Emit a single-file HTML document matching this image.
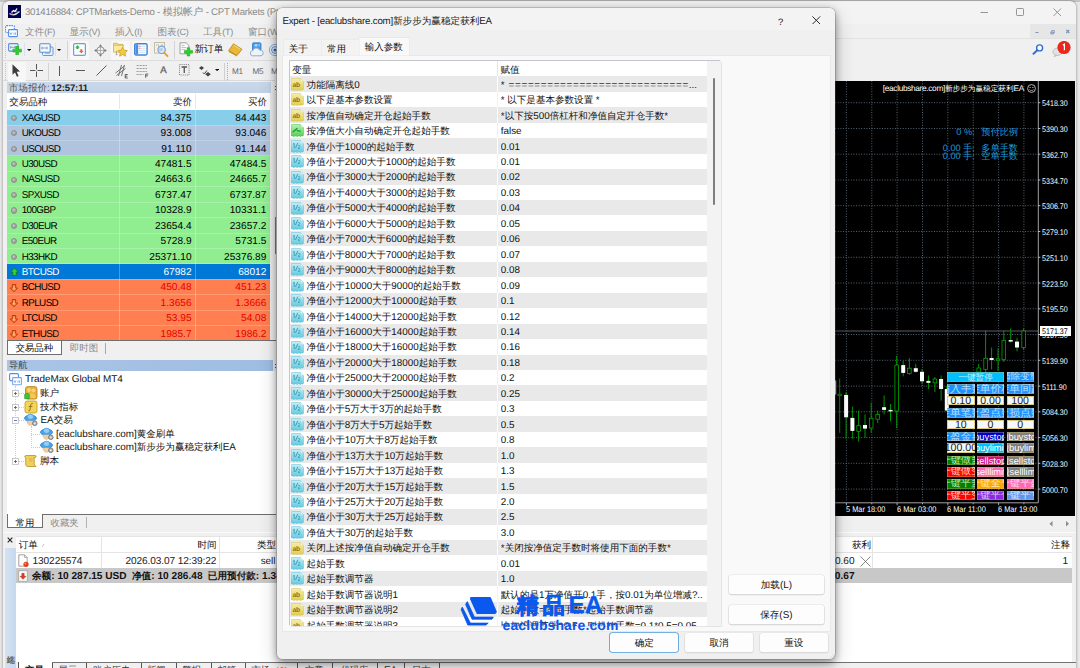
<!DOCTYPE html><html><head><meta charset="utf-8"><title>MT4</title><style>
*{margin:0;padding:0;box-sizing:border-box}
html,body{width:1080px;height:668px;overflow:hidden}
body{position:relative;background:#f0f0f0;font-family:"Liberation Sans",sans-serif;font-size:10px;color:#000;line-height:1;text-rendering:geometricPrecision}
.abs,.abs>*{position:absolute}
div,span,svg{position:absolute;white-space:nowrap}
i{font-style:normal;position:static}
.t{overflow:visible}

.lat{letter-spacing:-0.2px}
.mw{font-size:10px}

i{font-size:9.9px;letter-spacing:0}.seg i{font-size:.95em;letter-spacing:-.27px}
.mr{font-size:9.9px;letter-spacing:-.6px}.mn{font-size:10.1px;letter-spacing:.03px}
.tb i{font-size:10.1px;letter-spacing:.02px}
.pl{font-size:8.2px;color:#fff;transform:scaleX(.87);transform-origin:0 50%}
.bi{font-family:"Liberation Serif",serif;color:#1a98dc;font-size:9.2px}.bi i{font-family:"Liberation Sans",sans-serif;font-size:9.2px;letter-spacing:0}
.pb{overflow:hidden;display:flex;justify-content:center;font-family:"Liberation Serif",serif;box-shadow:inset 0 0 0 .6px rgba(205,185,95,.75)}.pb.l{font-family:"Liberation Sans",sans-serif;font-size:9.3px;letter-spacing:0;color:#fff}.pb.n{font-family:"Liberation Sans",sans-serif;font-size:10.6px;color:#1c1c1c;background:#f5f9ff;box-shadow:inset 0 0 0 .9px #dccb78}
.dr{font-size:9.56px;color:#111}.dr i{font-size:9.85px;letter-spacing:0}
.ic{overflow:visible}</style></head><body><div style="left:0px;top:0px;width:1080px;height:668px;background:#e9e9e9;"></div>
<div style="left:0px;top:0px;width:1080px;height:2px;background:#c4c4c4;"></div>
<div style="left:2.5px;top:1px;width:1073.5px;height:680px;background:#f0f0f0;border-radius:6px 6px 0 0;box-shadow:0 0 3px rgba(0,0,0,.45);"></div>
<div style="left:3px;top:1.5px;width:1072.5px;height:22.5px;background:#f3f3f3;border-radius:6px 6px 0 0;"></div>
<svg style="left:8px;top:5px" width="13" height="13" viewBox="0 0 13 13"><rect width="13" height="13" fill="#00004e"/><path d="M1.5 8.5 Q6 12 11.5 6.5" stroke="#e8e8f4" stroke-width="1.1" fill="none"/><path d="M3.5 7.5 L5.5 5.5 L7 6.5 L9 3.5" stroke="#fff" stroke-width="1.3" fill="none"/><circle cx="4" cy="8.6" r="0.9" fill="#d22"/><circle cx="8.8" cy="6.6" r="0.9" fill="#2a5"/></svg>
<div class="seg" style="top:6.10px;line-height:14.2px;height:14.2px;font-size:10.2px;left:25.00px;color:#8a8a8a;letter-spacing:-0.1px;"><i>301416884: CPTMarkets-Demo -</i> 模拟帐户 <i>- CPT Markets (Pty</i></div>
<svg style="left:980px;top:2px" width="96" height="22" viewBox="0 0 96 22"><g stroke="#8a8a8a" stroke-width="0.9" fill="none"><path d="M0.5 10.5h7.5"/><rect x="36.5" y="6.5" width="7" height="7" rx="0.8"/><path d="M73.5 6.5l7.5 7.5M81 6.5l-7.5 7.5"/></g></svg>
<div style="left:3px;top:24px;width:1072.5px;height:14px;background:#f0f0f0;"></div>
<svg style="left:5.300px;top:25px" width="14" height="13" viewBox="0 0 14 13"><rect x="0.6" y="0.6" width="8.8" height="7" rx="1" fill="#fff" stroke="#4f8fea" stroke-width="1.1" stroke-dasharray="1.6 0.8"/><rect x="3.6" y="4.6" width="8.8" height="7" rx="0.8" fill="#fff" stroke="#4f8fea" stroke-width="1.1"/><path d="M5 7.5l1 2 1-2 M9 7.5v2.2 M10.5 7.5v2.2" stroke="#5aa0f0" stroke-width="0.8" fill="none"/></svg>
<div class="seg" style="top:25.60px;line-height:13.6px;height:13.6px;font-size:9.6px;left:25.00px;color:#8c8c8c;">文件<i>(F)</i></div>
<div class="seg" style="top:25.60px;line-height:13.6px;height:13.6px;font-size:9.6px;left:69.50px;color:#8c8c8c;">显示<i>(V)</i></div>
<div class="seg" style="top:25.60px;line-height:13.6px;height:13.6px;font-size:9.6px;left:115.00px;color:#8c8c8c;">插入<i>(I)</i></div>
<div class="seg" style="top:25.60px;line-height:13.6px;height:13.6px;font-size:9.6px;left:157.50px;color:#8c8c8c;">图表<i>(C)</i></div>
<div class="seg" style="top:25.60px;line-height:13.6px;height:13.6px;font-size:9.6px;left:203.00px;color:#8c8c8c;">工具<i>(T)</i></div>
<div class="seg" style="top:25.60px;line-height:13.6px;height:13.6px;font-size:9.6px;left:248.00px;color:#8c8c8c;">窗口<i>(W)</i></div>
<div style="left:1030px;top:24px;width:45.5px;height:14px;background:#e6e6e6;"></div>
<svg style="left:1023px;top:24px" width="52" height="14" viewBox="0 0 52 14"><g stroke="#7c93b2" stroke-width="1" fill="none"><path d="M12.5 8.5h3"/><path d="M28.800 6.500h2.500v2.500h-2.500z M27.800 8h2.500v2h-2.500z" stroke-width="0.8"/><path d="M43.300 6l3 3M46.300 6l-3 3" stroke-width="1.100"/></g></svg>
<div style="left:3px;top:38px;width:1072.5px;height:1px;background:#e2e2e2;"></div>
<div style="left:3px;top:60px;width:272px;height:1px;background:#dcdcdc;"></div>
<div style="left:3px;top:80px;width:272px;height:1px;background:#dadada;"></div>
<div style="left:4.5px;top:41px;width:1px;height:17px;border-left:1px dotted #c4c4c4;"></div>
<div style="left:4.5px;top:63px;width:1px;height:17px;border-left:1px dotted #c4c4c4;"></div>
<svg style="left:8.2px;top:43px" width="14" height="12" viewBox="0 0 14 12"><rect x="0.600" y=".6" width="9.500" height="7.500" rx="1" fill="#eaf2fb" stroke="#5b8ed0" stroke-width="1.100"/><path d="M2.300 4.300h5M2.800 2.800v3M7 2.800v3" stroke="#6a86a8" stroke-width=".7"/><path d="M7.800 3.300h2.800v2.900h2.900v2.800h-2.900v2.800h-2.800v-2.800h-2.900v-2.800h2.900z" fill="#2fce2f" stroke="#18a018" stroke-width=".5"/></svg>
<svg style="left:27px;top:48.6px" width="4.2" height="2.2" viewBox="0 0 4.2 2.2"><path d="M0 0h4.200l-2.100 2.200z" fill="#111"/></svg>
<div style="left:23.5px;top:43px;width:1px;height:13px;background:#d6e2f2;"></div>
<svg style="left:39px;top:43px" width="16" height="15" viewBox="0 0 16 15"><rect x="3.5" y="4" width="10.5" height="8.5" rx="1" fill="#e8f0fa" stroke="#6a9ad6" stroke-width="1"/><rect x="0.7" y="0.8" width="10.5" height="8.5" rx="1" fill="#f4f8fd" stroke="#5b8ed0" stroke-width="1.1"/><path d="M2.5 5h6M3 3.6v2.8M8 3.6v2.8" stroke="#6a86a8" stroke-width=".7"/><path d="M6 10.5h5" stroke="#8aa8cc" stroke-width=".7"/></svg>
<svg style="left:57.4px;top:48.6px" width="4.2" height="2.2" viewBox="0 0 4.2 2.2"><path d="M0 0h4.200l-2.100 2.200z" fill="#111"/></svg>
<div style="left:54.5px;top:43px;width:1px;height:13px;background:#d6e2f2;"></div>
<div style="left:67px;top:41px;width:1px;height:18px;background:#d4d4d4;"></div>
<div style="left:70px;top:40.5px;width:19px;height:19px;background:#f8f8f8;border-radius:2px;"></div>
<svg style="left:73px;top:43px" width="13" height="13" viewBox="0 0 13 13"><rect x="0.6" y="0.6" width="11.8" height="11.8" rx="1.2" fill="#fafcff" stroke="#6aa0dc" stroke-width="1.2"/><path d="M4.5 2.2l2.3 2.3h-1.3v1.6h-2v-1.6h-1.3z" fill="#2cb52c"/><path d="M8.3 10.2l-2.3-2.3h1.3v-1.6h2v1.6h1.3z" fill="#f06030"/></svg>
<svg style="left:94px;top:43.5px" width="13" height="13" viewBox="0 0 13 13"><circle cx="6.5" cy="6.5" r="3.700" fill="none" stroke="#8a8a8a" stroke-width=".9"/><path d="M6.500 2v9M2 6.500h9" stroke="#9a9a9a" stroke-width=".7"/><path d="M6.500 .2l1.700 2.300h-3.400zM6.500 12.800l1.700-2.300h-3.400zM.2 6.500l2.300-1.700v3.400zM12.800 6.500l-2.300-1.700v3.400z" fill="#777"/></svg>
<div style="left:110.5px;top:40.5px;width:19.5px;height:19px;background:#f8f8f8;border-radius:2px;"></div>
<svg style="left:113px;top:42px" width="15" height="16" viewBox="0 0 15 16"><path d="M0.5 3.2v-2h4l1 1.2h4.5v2.5" fill="#f6e08a" stroke="#caa83a" stroke-width=".7"/><path d="M0.5 3.2h9.8l-1 7h-8.8z" fill="#fbeaa0" stroke="#caa83a" stroke-width=".7"/><path d="M3.5 9v4M2.6 12.2l.9 1 .9-1" stroke="#888" stroke-width=".6" fill="none"/><path d="M9.6 5.2l1.5 3 3.3.4-2.4 2.3.6 3.3-3-1.6-3 1.6.6-3.3-2.4-2.3 3.3-.4z" fill="#f5c93a" stroke="#c89a1c" stroke-width=".7"/></svg>
<div style="left:131.5px;top:40.5px;width:18px;height:19px;background:#f8f8f8;border-radius:2px;"></div>
<svg style="left:134px;top:43px" width="14" height="13" viewBox="0 0 14 13"><rect x="0.700" y="0.700" width="12.400" height="11.300" rx="1.400" fill="#fff" stroke="#3f86d8" stroke-width="1.400"/><rect x="1.400" y="1.400" width="2.800" height="9.900" fill="#4a90e0"/><path d="M5 3.300h6.800M5 5.300h6.800M5 7.300h6.800M5 9.300h6.800" stroke="#c4d8f0" stroke-width=".7"/><path d="M4.600 3.300h2M4.600 5.300h2" stroke="#f08a8a" stroke-width=".8"/></svg>
<svg style="left:154px;top:42px" width="16" height="17" viewBox="0 0 16 17"><rect x="0.6" y="0.6" width="10" height="10.5" fill="#f5f1e6" stroke="#b8ae98" stroke-width=".8"/><path d="M2 3h1.5M4.5 2.5v2M7 3h2" stroke="#8aa" stroke-width=".7"/><circle cx="7.6" cy="7.8" r="3.7" fill="#d7e8fa" fill-opacity=".85" stroke="#7aa2d6" stroke-width="1.2"/><path d="M6 6.4v2.6M7.8 6v3" stroke="#7aa2d6" stroke-width=".7"/><path d="M10.4 10.8l3.2 3.4" stroke="#e0a030" stroke-width="1.8" stroke-linecap="round"/></svg>
<div style="left:173.5px;top:41px;width:1px;height:18px;background:#d4d4d4;"></div>
<svg style="left:179px;top:42px" width="16" height="17" viewBox="0 0 16 17"><path d="M1 .8h6.2l2.6 2.6v8.4h-8.8z" fill="#fafafa" stroke="#8a8a8a" stroke-width=".8"/><path d="M2.5 3.5h3M2.5 5.5h5M2.5 7.500h4" stroke="#aaa" stroke-width=".7"/><path d="M8.200 5.800h2.600v2.800h2.800v2.600h-2.800v2.800h-2.600v-2.800h-2.800v-2.600h2.800z" fill="#2fce2f" stroke="#18a018" stroke-width=".5"/></svg>
<div style="top:42.60px;line-height:13.6px;height:13.6px;font-size:9.6px;left:194.50px;color:#111;">新订单</div>
<svg style="left:228px;top:43px" width="15" height="14" viewBox="0 0 15 14"><path d="M5.5 .8l8.5 5.5-5 6.2-8.3-5z" fill="#e9b83a" stroke="#b88412" stroke-width=".8"/><path d="M.8 7.6l8.2 4.9 0 1-8.2-4.6z" fill="#c48e1a"/><path d="M5.8 2l6.6 4.4" stroke="#f8dc80" stroke-width=".9"/></svg>
<svg style="left:249px;top:42px" width="15" height="16" viewBox="0 0 15 16"><rect x="3.5" y=".8" width="8.5" height="7.5" rx="1.2" fill="#4aa0ec" stroke="#2a78c8" stroke-width=".8"/><path d="M5.5 3.2h3M7 2.2v2.5M9.5 3h1.5" stroke="#fff" stroke-width=".7"/><path d="M3.2 13.800a2.600 2.600 0 0 1 .6-5.100a3.600 3.600 0 0 1 6.800-.6a2.900 2.900 0 0 1 1.400 5.700z" fill="#eef3fa" stroke="#8aa4c8" stroke-width=".9"/></svg>
<svg style="left:268px;top:43px" width="12" height="14" viewBox="0 0 12 14"><circle cx="7" cy="7" r="5.6" fill="none" stroke="#8ab0dc" stroke-width="1"/><circle cx="7" cy="7" r="3.4" fill="none" stroke="#5a90d0" stroke-width="1"/><circle cx="7" cy="7" r="1.6" fill="#2a68c0"/><rect x="9" y="5" width="3" height="9" fill="#3aa83a"/></svg>
<div style="left:7.5px;top:61.5px;width:18.5px;height:20px;background:#f7f7f7;border-radius:2px;"></div>
<svg style="left:12px;top:63.9px" width="8" height="13" viewBox="0 0 8 13"><path d="M.5 .3v10.500l2.500-2.300 1.900 4.200 1.700-.8-1.900-4.100 3.300-.3z" fill="#3c3c3c"/></svg>
<svg style="left:30px;top:64.1px" width="13" height="13" viewBox="0 0 13 13"><path d="M6.500 0v13M0 6.500h13" stroke="#555" stroke-width="1"/><rect x="5.500" y="5.500" width="2" height="2" fill="#f0f0f0"/></svg>
<div style="left:48px;top:63px;width:1px;height:17px;background:#d4d4d4;"></div>
<div style="left:59px;top:65.5px;width:1px;height:10.5px;background:#5a5a5a;"></div>
<div style="left:75.5px;top:70px;width:9.5px;height:1px;background:#5a5a5a;"></div>
<svg style="left:96px;top:65px" width="11" height="11" viewBox="0 0 11 11"><path d="M.5 10.500l10-10" stroke="#5a5a5a" stroke-width="1"/></svg>
<svg style="left:115px;top:63.5px" width="14" height="15" viewBox="0 0 14 15"><path d="M.5 9l9-7M1.500 11.500l9-7M3.500 12l3-11M6.500 12l3-11" stroke="#666" stroke-width=".9"/><path d="M10.200 10.500h2.600M10.200 10.500v3.500h2.600M10.200 12.200h2.200" stroke="#444" stroke-width=".8" fill="none"/></svg>
<svg style="left:136px;top:64px" width="13" height="14" viewBox="0 0 13 14"><path d="M.5 1.500h10.500M.5 4.500h10.500M.5 7.500h10.500M.5 10.500h7" stroke="#8a8a8a" stroke-width=".8" stroke-dasharray="2.200 .8"/><path d="M9.700 10h2.600M9.700 10v3.800M9.700 11.800h2.200" stroke="#444" stroke-width=".8" fill="none"/></svg>
<div style="top:64.40px;line-height:13.6px;height:13.6px;font-size:9.6px;left:160.30px;color:#666;-webkit-text-stroke:.35px #666;">A</div>
<svg style="left:179px;top:64px" width="11" height="12" viewBox="0 0 11 12"><rect x=".5" y=".5" width="9.500" height="10.500" fill="none" stroke="#777" stroke-width=".8" stroke-dasharray="1.200 .9"/><path d="M2.500 3h5.500M5.250 3v6" stroke="#555" stroke-width="1.300"/></svg>
<svg style="left:199px;top:65.7px" width="13" height="11" viewBox="0 0 13 11"><path d="M2.500 0l2.500 2-2.500 2-2.500-2zM9 6l2.800 2.200-2.800 2.200-2.800-2.200z" fill="#444"/><path d="M4 6.500l1.300 1.500 2.600-3.500" stroke="#444" stroke-width="1" fill="none"/></svg>
<svg style="left:214.5px;top:68.8px" width="4.2" height="2.2" viewBox="0 0 4.2 2.2"><path d="M0 0h4.200l-2.100 2.200z" fill="#111"/></svg>
<div style="left:224px;top:62.5px;width:1px;height:18px;background:#d0d0d0;"></div>
<div style="left:226.5px;top:63px;width:1px;height:17px;border-left:1px dotted #aaa;"></div>
<div style="top:65.60px;line-height:12.2px;height:12.2px;font-size:8.2px;left:232.00px;color:#686868;letter-spacing:-.2px;">M1</div>
<div style="top:65.60px;line-height:12.2px;height:12.2px;font-size:8.2px;left:252.50px;color:#686868;letter-spacing:-.2px;">M5</div>
<div style="top:65.60px;line-height:12.2px;height:12.2px;font-size:8.2px;left:271.00px;color:#686868;letter-spacing:-.2px;">M15</div>
<svg style="left:1032.3px;top:43.5px" width="12" height="11" viewBox="0 0 12 11"><circle cx="7.600" cy="3.900" r="3" fill="#fff" stroke="#2f6fd0" stroke-width="1.400"/><path d="M5.300 6.200l-3.800 3.600" stroke="#2f6fd0" stroke-width="1.900" stroke-linecap="round"/></svg>
<svg style="left:1052px;top:41.2px" width="22" height="17" viewBox="0 0 22 17"><ellipse cx="5.500" cy="10.800" rx="4.600" ry="3.700" fill="#e2e2e2" stroke="#b4b4b4" stroke-width=".7"/><path d="M3 13.500l-1 2.500 3.200-1.600z" fill="#d4d4d4" stroke="#b4b4b4" stroke-width=".5"/><circle cx="12" cy="6.500" r="6.600" fill="#e8291c"/><path d="M10.800 4.200l1.600-1v6" stroke="#fff" stroke-width="1.200" fill="none"/></svg>
<div style="left:3px;top:82.2px;width:272.5px;height:260px;background:#f0f0f0;"></div>
<div style="left:6.5px;top:82.4px;width:264.0px;height:10.6px;background:linear-gradient(#c9d9ea,#c2d3e6);"></div>
<div style="top:81.82px;line-height:13.56px;height:13.56px;font-size:9.56px;left:8.80px;color:#555;">市场报价<i style="letter-spacing:-.6px">: </i><b style="color:#222"><i style="font-size:9.500px;letter-spacing:-.1px">12:57:11</i></b></div>
<div style="left:275.3px;top:86px;width:1px;height:1px;background:#555;"></div>
<div style="left:275.3px;top:89px;width:1px;height:1px;background:#555;"></div>
<div style="left:6.5px;top:93.3px;width:263.5px;height:16.3px;background:#fff;"></div>
<div style="top:96.12px;line-height:13.56px;height:13.56px;font-size:9.56px;left:9.20px;color:#222;">交易品种</div>
<div style="top:96.12px;line-height:13.56px;height:13.56px;font-size:9.56px;right:888.00px;text-align:right;color:#222;">卖价</div>
<div style="top:96.12px;line-height:13.56px;height:13.56px;font-size:9.56px;right:813.00px;text-align:right;color:#222;">买价</div>
<div style="left:119px;top:94px;width:1px;height:15px;background:#e8e8e8;"></div>
<div style="left:194.5px;top:94px;width:1px;height:15px;background:#e8e8e8;"></div>
<div style="left:6.5px;top:109.6px;width:263.5px;height:15.73px;background:#87ceeb;overflow:hidden;"></div>
<div class="mr" style="top:111.77px;line-height:13.9px;height:13.9px;font-size:9.9px;left:21.70px;color:#000;">XAGUSD</div>
<div class="mn" style="top:111.67px;line-height:14.1px;height:14.1px;font-size:10.1px;right:888.40px;text-align:right;color:#000;">84.375</div>
<div class="mn" style="top:111.67px;line-height:14.1px;height:14.1px;font-size:10.1px;right:813.60px;text-align:right;color:#000;">84.443</div>
<div style="left:11.2px;top:114.81px;width:6.2px;height:6.2px;border-radius:50%;background:radial-gradient(circle at 40% 35%,#c8c8c8,#9a9a9a 70%,#858585);border:.5px solid #8d8d8d"></div>
<div style="left:6.5px;top:125.03px;width:263.5px;height:15.73px;background:#b0c4de;overflow:hidden;"></div>
<div class="mr" style="top:127.20px;line-height:13.9px;height:13.9px;font-size:9.9px;left:21.70px;color:#000;">UKOUSD</div>
<div class="mn" style="top:127.10px;line-height:14.1px;height:14.1px;font-size:10.1px;right:888.40px;text-align:right;color:#000;">93.008</div>
<div class="mn" style="top:127.10px;line-height:14.1px;height:14.1px;font-size:10.1px;right:813.60px;text-align:right;color:#000;">93.046</div>
<div style="left:11.2px;top:130.25px;width:6.2px;height:6.2px;border-radius:50%;background:radial-gradient(circle at 40% 35%,#c8c8c8,#9a9a9a 70%,#858585);border:.5px solid #8d8d8d"></div>
<div style="left:6.5px;top:140.46px;width:263.5px;height:15.73px;background:#b0c4de;overflow:hidden;"></div>
<div class="mr" style="top:142.62px;line-height:13.9px;height:13.9px;font-size:9.9px;left:21.70px;color:#000;">USOUSD</div>
<div class="mn" style="top:142.52px;line-height:14.1px;height:14.1px;font-size:10.1px;right:888.40px;text-align:right;color:#000;">91.110</div>
<div class="mn" style="top:142.52px;line-height:14.1px;height:14.1px;font-size:10.1px;right:813.60px;text-align:right;color:#000;">91.144</div>
<div style="left:11.2px;top:145.67px;width:6.2px;height:6.2px;border-radius:50%;background:radial-gradient(circle at 40% 35%,#c8c8c8,#9a9a9a 70%,#858585);border:.5px solid #8d8d8d"></div>
<div style="left:6.5px;top:155.89px;width:263.5px;height:15.73px;background:#90ee90;overflow:hidden;"></div>
<div class="mr" style="top:158.06px;line-height:13.9px;height:13.9px;font-size:9.9px;left:21.70px;color:#000;">U30USD</div>
<div class="mn" style="top:157.95px;line-height:14.1px;height:14.1px;font-size:10.1px;right:888.40px;text-align:right;color:#000;">47481.5</div>
<div class="mn" style="top:157.95px;line-height:14.1px;height:14.1px;font-size:10.1px;right:813.60px;text-align:right;color:#000;">47484.5</div>
<div style="left:11.2px;top:161.10px;width:6.2px;height:6.2px;border-radius:50%;background:radial-gradient(circle at 40% 35%,#c8c8c8,#9a9a9a 70%,#858585);border:.5px solid #8d8d8d"></div>
<div style="left:6.5px;top:171.32px;width:263.5px;height:15.73px;background:#90ee90;overflow:hidden;"></div>
<div class="mr" style="top:173.49px;line-height:13.9px;height:13.9px;font-size:9.9px;left:21.70px;color:#000;">NASUSD</div>
<div class="mn" style="top:173.38px;line-height:14.1px;height:14.1px;font-size:10.1px;right:888.40px;text-align:right;color:#000;">24663.6</div>
<div class="mn" style="top:173.38px;line-height:14.1px;height:14.1px;font-size:10.1px;right:813.60px;text-align:right;color:#000;">24665.7</div>
<div style="left:11.2px;top:176.53px;width:6.2px;height:6.2px;border-radius:50%;background:radial-gradient(circle at 40% 35%,#c8c8c8,#9a9a9a 70%,#858585);border:.5px solid #8d8d8d"></div>
<div style="left:6.5px;top:186.75px;width:263.5px;height:15.73px;background:#90ee90;overflow:hidden;"></div>
<div class="mr" style="top:188.92px;line-height:13.9px;height:13.9px;font-size:9.9px;left:21.70px;color:#000;">SPXUSD</div>
<div class="mn" style="top:188.81px;line-height:14.1px;height:14.1px;font-size:10.1px;right:888.40px;text-align:right;color:#000;">6737.47</div>
<div class="mn" style="top:188.81px;line-height:14.1px;height:14.1px;font-size:10.1px;right:813.60px;text-align:right;color:#000;">6737.87</div>
<div style="left:11.2px;top:191.97px;width:6.2px;height:6.2px;border-radius:50%;background:radial-gradient(circle at 40% 35%,#c8c8c8,#9a9a9a 70%,#858585);border:.5px solid #8d8d8d"></div>
<div style="left:6.5px;top:202.18px;width:263.5px;height:15.73px;background:#90ee90;overflow:hidden;"></div>
<div class="mr" style="top:204.35px;line-height:13.9px;height:13.9px;font-size:9.9px;left:21.70px;color:#000;">100GBP</div>
<div class="mn" style="top:204.25px;line-height:14.1px;height:14.1px;font-size:10.1px;right:888.40px;text-align:right;color:#000;">10328.9</div>
<div class="mn" style="top:204.25px;line-height:14.1px;height:14.1px;font-size:10.1px;right:813.60px;text-align:right;color:#000;">10331.1</div>
<div style="left:11.2px;top:207.40px;width:6.2px;height:6.2px;border-radius:50%;background:radial-gradient(circle at 40% 35%,#c8c8c8,#9a9a9a 70%,#858585);border:.5px solid #8d8d8d"></div>
<div style="left:6.5px;top:217.61px;width:263.5px;height:15.73px;background:#90ee90;overflow:hidden;"></div>
<div class="mr" style="top:219.78px;line-height:13.9px;height:13.9px;font-size:9.9px;left:21.70px;color:#000;">D30EUR</div>
<div class="mn" style="top:219.67px;line-height:14.1px;height:14.1px;font-size:10.1px;right:888.40px;text-align:right;color:#000;">23654.4</div>
<div class="mn" style="top:219.67px;line-height:14.1px;height:14.1px;font-size:10.1px;right:813.60px;text-align:right;color:#000;">23657.2</div>
<div style="left:11.2px;top:222.82px;width:6.2px;height:6.2px;border-radius:50%;background:radial-gradient(circle at 40% 35%,#c8c8c8,#9a9a9a 70%,#858585);border:.5px solid #8d8d8d"></div>
<div style="left:6.5px;top:233.04px;width:263.5px;height:15.73px;background:#90ee90;overflow:hidden;"></div>
<div class="mr" style="top:235.21px;line-height:13.9px;height:13.9px;font-size:9.9px;left:21.70px;color:#000;">E50EUR</div>
<div class="mn" style="top:235.10px;line-height:14.1px;height:14.1px;font-size:10.1px;right:888.40px;text-align:right;color:#000;">5728.9</div>
<div class="mn" style="top:235.10px;line-height:14.1px;height:14.1px;font-size:10.1px;right:813.60px;text-align:right;color:#000;">5731.5</div>
<div style="left:11.2px;top:238.25px;width:6.2px;height:6.2px;border-radius:50%;background:radial-gradient(circle at 40% 35%,#c8c8c8,#9a9a9a 70%,#858585);border:.5px solid #8d8d8d"></div>
<div style="left:6.5px;top:248.47px;width:263.5px;height:15.73px;background:#90ee90;overflow:hidden;"></div>
<div class="mr" style="top:250.63px;line-height:13.9px;height:13.9px;font-size:9.9px;left:21.70px;color:#000;">H33HKD</div>
<div class="mn" style="top:250.53px;line-height:14.1px;height:14.1px;font-size:10.1px;right:888.40px;text-align:right;color:#000;">25371.10</div>
<div class="mn" style="top:250.53px;line-height:14.1px;height:14.1px;font-size:10.1px;right:813.60px;text-align:right;color:#000;">25376.89</div>
<div style="left:11.2px;top:253.69px;width:6.2px;height:6.2px;border-radius:50%;background:radial-gradient(circle at 40% 35%,#c8c8c8,#9a9a9a 70%,#858585);border:.5px solid #8d8d8d"></div>
<div style="left:6.5px;top:263.9px;width:263.5px;height:15.73px;background:#0078d7;overflow:hidden;"></div>
<div class="mr" style="top:266.06px;line-height:13.9px;height:13.9px;font-size:9.9px;left:21.70px;color:#fff;">BTCUSD</div>
<div class="mn" style="top:265.96px;line-height:14.1px;height:14.1px;font-size:10.1px;right:888.40px;text-align:right;color:#fff;">67982</div>
<div class="mn" style="top:265.96px;line-height:14.1px;height:14.1px;font-size:10.1px;right:813.60px;text-align:right;color:#fff;">68012</div>
<svg style="left:10px;top:268.21px" width="9" height="8" viewBox="0 0 9 8"><path d="M4.500 .3l4 3.700h-2.300v3.500h-3.400v-3.500h-2.300z" fill="#38d038" stroke="#0a7a0a" stroke-width=".7"/></svg>
<div style="left:6.5px;top:279.33px;width:263.5px;height:15.73px;background:#ff7f50;overflow:hidden;"></div>
<div class="mr" style="top:281.49px;line-height:13.9px;height:13.9px;font-size:9.9px;left:21.70px;color:#000;">BCHUSD</div>
<div class="mn" style="top:281.39px;line-height:14.1px;height:14.1px;font-size:10.1px;right:888.40px;text-align:right;color:#e60000;">450.48</div>
<div class="mn" style="top:281.39px;line-height:14.1px;height:14.1px;font-size:10.1px;right:813.60px;text-align:right;color:#e60000;">451.23</div>
<svg style="left:9.8px;top:283.64px" width="8" height="8" viewBox="0 0 8 8"><defs><radialGradient id="og"><stop offset="0" stop-color="#ffc080"/><stop offset="1" stop-color="#ff6a20"/></radialGradient></defs><path d="M4 7.700l3.700-3.600h-2v-3.600h-3.400v3.600h-2z" fill="url(#og)" stroke="#b02800" stroke-width=".8"/></svg>
<div style="left:6.5px;top:294.76px;width:263.5px;height:15.73px;background:#ff7f50;overflow:hidden;"></div>
<div class="mr" style="top:296.92px;line-height:13.9px;height:13.9px;font-size:9.9px;left:21.70px;color:#000;">RPLUSD</div>
<div class="mn" style="top:296.82px;line-height:14.1px;height:14.1px;font-size:10.1px;right:888.40px;text-align:right;color:#e60000;">1.3656</div>
<div class="mn" style="top:296.82px;line-height:14.1px;height:14.1px;font-size:10.1px;right:813.60px;text-align:right;color:#e60000;">1.3666</div>
<svg style="left:9.8px;top:299.07px" width="8" height="8" viewBox="0 0 8 8"><defs><radialGradient id="og"><stop offset="0" stop-color="#ffc080"/><stop offset="1" stop-color="#ff6a20"/></radialGradient></defs><path d="M4 7.700l3.700-3.600h-2v-3.600h-3.400v3.600h-2z" fill="url(#og)" stroke="#b02800" stroke-width=".8"/></svg>
<div style="left:6.5px;top:310.19px;width:263.5px;height:15.73px;background:#ff7f50;overflow:hidden;"></div>
<div class="mr" style="top:312.35px;line-height:13.9px;height:13.9px;font-size:9.9px;left:21.70px;color:#000;">LTCUSD</div>
<div class="mn" style="top:312.25px;line-height:14.1px;height:14.1px;font-size:10.1px;right:888.40px;text-align:right;color:#e60000;">53.95</div>
<div class="mn" style="top:312.25px;line-height:14.1px;height:14.1px;font-size:10.1px;right:813.60px;text-align:right;color:#e60000;">54.08</div>
<svg style="left:9.8px;top:314.5px" width="8" height="8" viewBox="0 0 8 8"><defs><radialGradient id="og"><stop offset="0" stop-color="#ffc080"/><stop offset="1" stop-color="#ff6a20"/></radialGradient></defs><path d="M4 7.700l3.700-3.600h-2v-3.600h-3.400v3.600h-2z" fill="url(#og)" stroke="#b02800" stroke-width=".8"/></svg>
<div style="left:6.5px;top:325.62px;width:263.5px;height:14.68px;background:#ff7f50;overflow:hidden;"></div>
<div class="mr" style="top:327.78px;line-height:13.9px;height:13.9px;font-size:9.9px;left:21.70px;color:#000;clip-path:inset(0 0 1.7px 0);">ETHUSD</div>
<div class="mn" style="top:327.68px;line-height:14.1px;height:14.1px;font-size:10.1px;right:888.40px;text-align:right;color:#e60000;clip-path:inset(0 0 1.7px 0);">1985.7</div>
<div class="mn" style="top:327.68px;line-height:14.1px;height:14.1px;font-size:10.1px;right:813.60px;text-align:right;color:#e60000;clip-path:inset(0 0 1.7px 0);">1986.2</div>
<svg style="left:9.8px;top:329.94px" width="8" height="8" viewBox="0 0 8 8"><defs><radialGradient id="og"><stop offset="0" stop-color="#ffc080"/><stop offset="1" stop-color="#ff6a20"/></radialGradient></defs><path d="M4 7.700l3.700-3.600h-2v-3.600h-3.400v3.600h-2z" fill="url(#og)" stroke="#b02800" stroke-width=".8"/></svg>
<div style="left:119px;top:109.6px;width:1px;height:230.4px;background:rgba(255,255,255,.28);"></div>
<div style="left:194.5px;top:109.6px;width:1px;height:230.4px;background:rgba(255,255,255,.28);"></div>
<div style="left:6.5px;top:124.53px;width:264px;height:1px;background:rgba(255,255,255,.22);"></div>
<div style="left:6.5px;top:139.96px;width:264px;height:1px;background:rgba(255,255,255,.22);"></div>
<div style="left:6.5px;top:155.39px;width:264px;height:1px;background:rgba(255,255,255,.22);"></div>
<div style="left:6.5px;top:170.82px;width:264px;height:1px;background:rgba(255,255,255,.22);"></div>
<div style="left:6.5px;top:186.25px;width:264px;height:1px;background:rgba(255,255,255,.22);"></div>
<div style="left:6.5px;top:201.68px;width:264px;height:1px;background:rgba(255,255,255,.22);"></div>
<div style="left:6.5px;top:217.11px;width:264px;height:1px;background:rgba(255,255,255,.22);"></div>
<div style="left:6.5px;top:232.54px;width:264px;height:1px;background:rgba(255,255,255,.22);"></div>
<div style="left:6.5px;top:247.97px;width:264px;height:1px;background:rgba(255,255,255,.22);"></div>
<div style="left:6.5px;top:263.4px;width:264px;height:1px;background:rgba(255,255,255,.22);"></div>
<div style="left:6.5px;top:278.83px;width:264px;height:1px;background:rgba(255,255,255,.22);"></div>
<div style="left:6.5px;top:294.26px;width:264px;height:1px;background:rgba(255,255,255,.22);"></div>
<div style="left:6.5px;top:309.69px;width:264px;height:1px;background:rgba(255,255,255,.22);"></div>
<div style="left:6.5px;top:325.12px;width:264px;height:1px;background:rgba(255,255,255,.22);"></div>
<div style="left:270.5px;top:93.5px;width:5px;height:247px;background:#f0f0f0;"></div>
<div style="left:275px;top:216.5px;width:1.2px;height:37.5px;background:#7a7a7a;"></div>
<div style="left:6.5px;top:340px;width:269px;height:1px;background:#6e6e6e;"></div>
<div style="left:7.3px;top:340.5px;width:54.5px;height:14.2px;background:#fff;border:1px solid #6e6e6e;border-top:none;"></div>
<div style="top:341.57px;line-height:13.45px;height:13.45px;font-size:9.45px;left:15.40px;color:#111;">交易品种</div>
<div style="top:341.57px;line-height:13.45px;height:13.45px;font-size:9.45px;left:69.80px;color:#8a8a8a;">即时图</div>
<div style="left:105px;top:343px;width:1px;height:11px;background:#a8a8a8;"></div>
<div style="left:6.5px;top:360.2px;width:266px;height:11px;background:linear-gradient(90deg,#a9c4e6,#9fbde2);"></div>
<div style="top:359.20px;line-height:13.2px;height:13.2px;font-size:9.2px;left:9.00px;color:#444;">导航</div>
<div style="left:275.3px;top:364px;width:1px;height:1px;background:#555;"></div>
<div style="left:275.3px;top:367px;width:1px;height:1px;background:#555;"></div>
<div style="left:6.5px;top:371.2px;width:269px;height:142.8px;background:#fff;"></div>
<svg style="left:9px;top:373px" width="14" height="13" viewBox="0 0 14 13"><rect x=".6" y=".6" width="8.800" height="7" rx="1" fill="#fff" stroke="#4f8fea" stroke-width="1.100"/><rect x="3.600" y="4.600" width="8.800" height="7.200" rx=".8" fill="#fff" stroke="#7aa6e0" stroke-width="1.100"/><path d="M5 7.500l1 2 1-2M9 7.500v2.200M10.500 7.500v2.200" stroke="#5aa0f0" stroke-width=".8" fill="none"/></svg>
<div style="top:373.02px;line-height:13.95px;height:13.95px;font-size:9.95px;left:25.00px;color:#111;letter-spacing:-.04px;">TradeMax Global MT4</div>
<div style="left:14.5px;top:386px;width:1px;height:76px;border-left:1px dotted #cdcdcd;"></div>
<div style="left:15px;top:393px;width:9px;height:1px;border-top:1px dotted #cdcdcd;"></div>
<div style="left:15px;top:406.5px;width:9px;height:1px;border-top:1px dotted #cdcdcd;"></div>
<div style="left:15px;top:420px;width:9px;height:1px;border-top:1px dotted #cdcdcd;"></div>
<div style="left:15px;top:460.5px;width:9px;height:1px;border-top:1px dotted #cdcdcd;"></div>
<div style="left:30.5px;top:426px;width:1px;height:22px;border-left:1px dotted #cdcdcd;"></div>
<div style="left:31px;top:433.5px;width:9px;height:1px;border-top:1px dotted #cdcdcd;"></div>
<div style="left:31px;top:447px;width:9px;height:1px;border-top:1px dotted #cdcdcd;"></div>
<svg style="left:11.8px;top:390px" width="7" height="7" viewBox="0 0 7 7"><rect x=".5" y=".5" width="6" height="6" fill="#fff" stroke="#b4b4b4" stroke-width=".7"/><path d="M2 3.500h3M3.500 2v3" stroke="#3355aa" stroke-width=".8"/></svg>
<svg style="left:11.8px;top:403.5px" width="7" height="7" viewBox="0 0 7 7"><rect x=".5" y=".5" width="6" height="6" fill="#fff" stroke="#b4b4b4" stroke-width=".7"/><path d="M2 3.500h3M3.500 2v3" stroke="#3355aa" stroke-width=".8"/></svg>
<svg style="left:11.8px;top:417px" width="7" height="7" viewBox="0 0 7 7"><rect x=".5" y=".5" width="6" height="6" fill="#fff" stroke="#b4b4b4" stroke-width=".7"/><path d="M2 3.500h3" stroke="#3355aa" stroke-width=".8"/></svg>
<svg style="left:11.8px;top:457.5px" width="7" height="7" viewBox="0 0 7 7"><rect x=".5" y=".5" width="6" height="6" fill="#fff" stroke="#b4b4b4" stroke-width=".7"/><path d="M2 3.500h3M3.500 2v3" stroke="#3355aa" stroke-width=".8"/></svg>
<svg style="left:23.5px;top:386px" width="14" height="14" viewBox="0 0 14 14"><rect x="1.500" y=".6" width="11.500" height="12.500" rx="2.200" fill="#e8b23a" stroke="#b8801a" stroke-width=".8"/><circle cx="5" cy="4" r="2" fill="#f6d27a"/><circle cx="9.500" cy="4.500" r="2" fill="#f6d27a"/><path d="M6.500 7.500c2.500-1 5 .5 5 4.500h-5z" fill="#f2c860"/><path d="M.6 8.500c0-1.500 4.600-1.500 4.600 0v4.200h-4.600z" fill="#3ec43e" stroke="#1a8a1a" stroke-width=".5"/></svg>
<div style="top:387.22px;line-height:13.56px;height:13.56px;font-size:9.56px;left:40.00px;color:#111;">账户</div>
<svg style="left:23.5px;top:399.5px" width="14" height="14" viewBox="0 0 14 14"><rect x="1" y="1" width="12" height="12" rx="2.200" fill="#f3d35a" stroke="#c8a020" stroke-width=".9"/><path d="M8.800 3.500c-1.800-.6-2 1-2.300 3l-.6 3.500c-.2 1-1 1-1.500 .6M4.800 6.500h3.600" stroke="#8a6a10" stroke-width=".9" fill="none"/></svg>
<div style="top:400.82px;line-height:13.56px;height:13.56px;font-size:9.56px;left:40.00px;color:#111;">技术指标</div>
<svg style="left:23.5px;top:413px" width="14" height="14" viewBox="0 0 14 14"><ellipse cx="6.500" cy="5.200" rx="6" ry="3.200" fill="#4aa3e8" stroke="#2a7ac8" stroke-width=".7"/><ellipse cx="6.500" cy="3.800" rx="3.200" ry="2.600" fill="#8fd0f8" stroke="#3a8ad8" stroke-width=".6"/><path d="M3 7.800c0 3 2 4.500 3.500 4.500s3.500-1.500 3.500-4.500" fill="#f0d0a0" stroke="#c8a070" stroke-width=".5"/><circle cx="10.800" cy="10.300" r="2.300" fill="#b8b8b8" stroke="#6e6e6e" stroke-width=".8"/><circle cx="10.800" cy="10.300" r=".8" fill="#f4f4f4"/></svg>
<div style="top:414.02px;line-height:13.56px;height:13.56px;font-size:9.56px;left:40.50px;color:#111;"><i>EA</i>交易</div>
<svg style="left:39.5px;top:426.5px" width="14" height="14" viewBox="0 0 14 14"><ellipse cx="6.500" cy="5.200" rx="6" ry="3.200" fill="#4aa3e8" stroke="#2a7ac8" stroke-width=".7"/><ellipse cx="6.500" cy="3.800" rx="3.200" ry="2.600" fill="#8fd0f8" stroke="#3a8ad8" stroke-width=".6"/><path d="M3 7.800c0 3 2 4.500 3.500 4.500s3.500-1.500 3.500-4.500" fill="#f0d0a0" stroke="#c8a070" stroke-width=".5"/><circle cx="10.800" cy="10.300" r="2.300" fill="#b8b8b8" stroke="#6e6e6e" stroke-width=".8"/><circle cx="10.800" cy="10.300" r=".8" fill="#f4f4f4"/></svg>
<div style="top:427.62px;line-height:13.56px;height:13.56px;font-size:9.56px;left:56.00px;color:#111;"><i>[eaclubshare.com]</i>黄金刷单</div>
<svg style="left:39.5px;top:440px" width="14" height="14" viewBox="0 0 14 14"><ellipse cx="6.500" cy="5.200" rx="6" ry="3.200" fill="#4aa3e8" stroke="#2a7ac8" stroke-width=".7"/><ellipse cx="6.500" cy="3.800" rx="3.200" ry="2.600" fill="#8fd0f8" stroke="#3a8ad8" stroke-width=".6"/><path d="M3 7.800c0 3 2 4.500 3.500 4.500s3.500-1.500 3.500-4.500" fill="#f0d0a0" stroke="#c8a070" stroke-width=".5"/><circle cx="10.800" cy="10.300" r="2.300" fill="#b8b8b8" stroke="#6e6e6e" stroke-width=".8"/><circle cx="10.800" cy="10.300" r=".8" fill="#f4f4f4"/></svg>
<div style="top:441.02px;line-height:13.56px;height:13.56px;font-size:9.56px;left:56.00px;color:#111;"><i>[eaclubshare.com]</i>新步步为赢稳定获利<i>EA</i></div>
<svg style="left:23.5px;top:453.5px" width="14" height="14" viewBox="0 0 14 14"><path d="M2.500 1.500h8.500c1.500 0 1.500 2 0 2h-.8v6.500c0 1.500 2 2.500 2 2.500h-8.500c-1.500 0-2-1.200-2-2.500v-6c0-.8-.5-1-1-1.200c-.2-.8.500-1.300 1.800-1.300z" fill="#f1cf5e" stroke="#b8901c" stroke-width=".8"/><path d="M5 5h3.500M5 7h3.500" stroke="#c8a030" stroke-width=".7"/></svg>
<div style="top:454.62px;line-height:13.56px;height:13.56px;font-size:9.56px;left:40.00px;color:#111;">脚本</div>
<div style="left:6.5px;top:513.9px;width:269px;height:1px;background:#6e6e6e;"></div>
<div style="left:6.8px;top:514.4px;width:36px;height:14.1px;background:#fff;border:1px solid #6e6e6e;border-top:none;"></div>
<div style="top:516.30px;line-height:13.4px;height:13.4px;font-size:9.4px;left:15.50px;color:#111;">常用</div>
<div style="top:516.30px;line-height:13.4px;height:13.4px;font-size:9.4px;left:50.50px;color:#8a8a8a;">收藏夹</div>
<div style="left:85.8px;top:517px;width:1px;height:11px;background:#b4b4b4;"></div>
<div style="left:3px;top:534.5px;width:1073px;height:140px;background:#f0f0f0;"></div>
<div style="left:5px;top:548px;width:10.5px;height:127px;background:linear-gradient(90deg,#d4e2f3,#c6d8ee);"></div>
<svg style="left:6.5px;top:536.5px" width="6" height="6" viewBox="0 0 6 6"><path d="M.7 .7l4.600 4.600M5.300 .7l-4.600 4.600" stroke="#222" stroke-width="1.100"/></svg>
<div style="left:3.500px;top:649px;width:12px;font-size:8.500px;line-height:9px;color:#555;writing-mode:vertical-rl;white-space:nowrap;height:30px">终端</div>
<div style="left:16px;top:535.9px;width:1056px;height:126px;background:#fff;"></div>
<div style="left:3px;top:531.7px;width:1073px;height:1px;background:#fbfbfb;"></div>
<div style="left:16px;top:535.9px;width:1056px;height:1px;background:#e4e4e4;"></div>
<div style="left:16px;top:552.3px;width:1056px;height:1px;background:#e4e4e4;"></div>
<div style="left:100.5px;top:537px;width:1px;height:31px;background:#e4e4e4;"></div>
<div style="left:218.5px;top:537px;width:1px;height:31px;background:#e4e4e4;"></div>
<div style="left:872px;top:537px;width:1px;height:31px;background:#e4e4e4;"></div>
<div style="top:539.42px;line-height:13.56px;height:13.56px;font-size:9.56px;left:18.70px;color:#111;">订单</div>
<svg style="left:41.7px;top:544px" width="4" height="3" viewBox="0 0 4 3"><path d="M0 3l2-3" stroke="#aaa" stroke-width=".7"/></svg>
<div style="top:539.42px;line-height:13.56px;height:13.56px;font-size:9.56px;right:863.50px;text-align:right;color:#111;">时间</div>
<div style="top:539.42px;line-height:13.56px;height:13.56px;font-size:9.56px;right:804.00px;text-align:right;color:#111;">类型</div>
<div style="top:539.42px;line-height:13.56px;height:13.56px;font-size:9.56px;right:209.00px;text-align:right;color:#111;">获利</div>
<div style="top:539.42px;line-height:13.56px;height:13.56px;font-size:9.56px;right:10.00px;text-align:right;color:#111;">注释</div>
<svg style="left:18px;top:553.5px" width="11" height="14" viewBox="0 0 11 14"><path d="M.8 .8h5.700l2.700 2.700v8.700h-8.400z" fill="#fdfdfd" stroke="#8a8a8a" stroke-width=".8"/><path d="M6.500 .8v2.700h2.700" fill="none" stroke="#8a8a8a" stroke-width=".6"/><circle cx="8" cy="10.300" r="2.600" fill="#e8401c"/><circle cx="7.300" cy="9.600" r=".9" fill="#ff9a70"/></svg>
<div style="top:554.55px;line-height:14.1px;height:14.1px;font-size:10.1px;left:32.50px;color:#222;letter-spacing:-.08px;">130225574</div>
<div style="top:554.55px;line-height:14.1px;height:14.1px;font-size:10.1px;right:863.80px;text-align:right;color:#222;letter-spacing:-.1px;">2026.03.07 12:39:22</div>
<div style="top:554.65px;line-height:13.9px;height:13.9px;font-size:9.9px;right:804.50px;text-align:right;color:#222;">sell</div>
<div style="top:554.55px;line-height:14.1px;height:14.1px;font-size:10.1px;right:225.50px;text-align:right;color:#222;letter-spacing:-.05px;">0.60</div>
<svg style="left:860px;top:555.5px" width="11" height="11" viewBox="0 0 11 11"><path d="M.5 .5l10 10M10.500 .5l-10 10" stroke="#555" stroke-width=".7"/></svg>
<div style="top:554.55px;line-height:14.1px;height:14.1px;font-size:10.1px;right:12.00px;text-align:right;color:#222;">1</div>
<div style="left:16px;top:568.2px;width:1056px;height:14.5px;background:#c8c8c8;"></div>
<svg style="left:18px;top:569.5px" width="10" height="12" viewBox="0 0 10 12"><path d="M.7 .7h8.600v10.600h-8.600z" fill="#fff" stroke="#9a9a9a" stroke-width=".7"/><path d="M5 9.300l-3-3h1.800v-3h2.400v3h1.800z" fill="#e83a1c" stroke="#a01800" stroke-width=".4"/></svg>
<div class="tb" style="top:570.10px;line-height:13.6px;height:13.6px;font-size:9.6px;left:32.00px;color:#111;"><b>余额<i>: 10 287.15 USD</i>&nbsp; 净值<i>: 10 286.48</i>&nbsp; 已用预付款<i>: 1.34</i></b></div>
<div style="top:569.85px;line-height:14.1px;height:14.1px;font-size:10.1px;right:225.50px;text-align:right;color:#111;"><b>0.67</b></div>
<div style="left:16px;top:662.6px;width:1059.5px;height:8px;background:#f0f0f0;"></div>
<div style="left:51.5px;top:661.7px;width:1024px;height:1px;background:#747474;"></div>
<div style="left:17.5px;top:661.5px;width:34px;height:8px;background:#fff;border-left:1px solid #555;"></div>
<div style="top:663.85px;line-height:13.3px;height:13.3px;font-size:9.3px;left:25.00px;color:#111;"><b>交易</b></div>
<div style="top:663.85px;line-height:13.3px;height:13.3px;font-size:9.3px;left:58.50px;color:#333;">展示</div>
<div style="top:663.85px;line-height:13.3px;height:13.3px;font-size:9.3px;left:93.00px;color:#333;">账户历史</div>
<div style="top:663.85px;line-height:13.3px;height:13.3px;font-size:9.3px;left:147.00px;color:#333;">新闻</div>
<div style="top:663.85px;line-height:13.3px;height:13.3px;font-size:9.3px;left:182.50px;color:#333;">警报</div>
<div style="top:663.85px;line-height:13.3px;height:13.3px;font-size:9.3px;left:217.50px;color:#333;">邮箱</div>
<div style="top:663.85px;line-height:13.3px;height:13.3px;font-size:9.3px;left:251.50px;color:#333;">市场</div>
<div style="top:663.85px;line-height:13.3px;height:13.3px;font-size:9.3px;left:305.00px;color:#333;">文章</div>
<div style="top:663.85px;line-height:13.3px;height:13.3px;font-size:9.3px;left:340.50px;color:#333;">代码库</div>
<div style="top:663.85px;line-height:13.3px;height:13.3px;font-size:9.3px;left:384.00px;color:#333;"><i>EA</i></div>
<div style="top:663.85px;line-height:13.3px;height:13.3px;font-size:9.3px;left:412.00px;color:#333;">日志</div>
<div style="left:51.5px;top:662.8px;width:1px;height:6px;background:#555;"></div>
<div style="left:86px;top:662.8px;width:1px;height:6px;background:#555;"></div>
<div style="left:140.5px;top:662.8px;width:1px;height:6px;background:#555;"></div>
<div style="left:175.5px;top:662.8px;width:1px;height:6px;background:#555;"></div>
<div style="left:210.5px;top:662.8px;width:1px;height:6px;background:#555;"></div>
<div style="left:245px;top:662.8px;width:1px;height:6px;background:#555;"></div>
<div style="left:297px;top:662.8px;width:1px;height:6px;background:#555;"></div>
<div style="left:331.5px;top:662.8px;width:1px;height:6px;background:#555;"></div>
<div style="left:376.5px;top:662.8px;width:1px;height:6px;background:#555;"></div>
<div style="left:403.5px;top:662.8px;width:1px;height:6px;background:#555;"></div>
<div style="left:438.5px;top:662.8px;width:1px;height:6px;background:#555;"></div>
<div style="top:665.00px;line-height:11px;height:11px;font-size:7px;left:276.00px;color:#e22;">101</div>
<svg style="left:1048.5px;top:520.2px" width="20" height="8" viewBox="0 0 20 8"><path d="M3.500 1v5.500l-3-2.750zM17 1v5.500l3-2.750z" fill="#8a8a8a"/></svg>
<div style="left:830px;top:80.8px;width:244.5px;height:434.8px;background:#000;"></div>
<svg style="left:0;top:0" width="1080" height="668" viewBox="0 0 1080 668"><defs><clipPath id="cc"><rect x="830" y="80.8" width="208.29999999999995" height="421.59999999999997"/></clipPath></defs><g clip-path="url(#cc)"><path d="M830 102.7H1038.3" stroke="#6a7f94" stroke-width=".8" stroke-dasharray="1 1.6"/><path d="M830 128.5H1038.3" stroke="#6a7f94" stroke-width=".8" stroke-dasharray="1 1.6"/><path d="M830 154.2H1038.3" stroke="#6a7f94" stroke-width=".8" stroke-dasharray="1 1.6"/><path d="M830 180.0H1038.3" stroke="#6a7f94" stroke-width=".8" stroke-dasharray="1 1.6"/><path d="M830 205.7H1038.3" stroke="#6a7f94" stroke-width=".8" stroke-dasharray="1 1.6"/><path d="M830 231.5H1038.3" stroke="#6a7f94" stroke-width=".8" stroke-dasharray="1 1.6"/><path d="M830 257.3H1038.3" stroke="#6a7f94" stroke-width=".8" stroke-dasharray="1 1.6"/><path d="M830 283.0H1038.3" stroke="#6a7f94" stroke-width=".8" stroke-dasharray="1 1.6"/><path d="M830 308.8H1038.3" stroke="#6a7f94" stroke-width=".8" stroke-dasharray="1 1.6"/><path d="M830 334.5H1038.3" stroke="#6a7f94" stroke-width=".8" stroke-dasharray="1 1.6"/><path d="M830 360.3H1038.3" stroke="#6a7f94" stroke-width=".8" stroke-dasharray="1 1.6"/><path d="M830 386.1H1038.3" stroke="#6a7f94" stroke-width=".8" stroke-dasharray="1 1.6"/><path d="M830 411.8H1038.3" stroke="#6a7f94" stroke-width=".8" stroke-dasharray="1 1.6"/><path d="M830 437.6H1038.3" stroke="#6a7f94" stroke-width=".8" stroke-dasharray="1 1.6"/><path d="M830 463.3H1038.3" stroke="#6a7f94" stroke-width=".8" stroke-dasharray="1 1.6"/><path d="M830 489.1H1038.3" stroke="#6a7f94" stroke-width=".8" stroke-dasharray="1 1.6"/><path d="M846.4 80.8V502.5" stroke="#6a7f94" stroke-width=".8" stroke-dasharray="1 1.600"/><path d="M871.8 80.8V502.5" stroke="#6a7f94" stroke-width=".8" stroke-dasharray="1 1.600"/><path d="M897.1 80.8V502.5" stroke="#6a7f94" stroke-width=".8" stroke-dasharray="1 1.600"/><path d="M922.5 80.8V502.5" stroke="#6a7f94" stroke-width=".8" stroke-dasharray="1 1.600"/><path d="M947.8 80.8V502.5" stroke="#6a7f94" stroke-width=".8" stroke-dasharray="1 1.600"/><path d="M973.2 80.8V502.5" stroke="#6a7f94" stroke-width=".8" stroke-dasharray="1 1.600"/><path d="M998.6 80.8V502.5" stroke="#6a7f94" stroke-width=".8" stroke-dasharray="1 1.600"/><path d="M1023.9 80.8V502.5" stroke="#6a7f94" stroke-width=".8" stroke-dasharray="1 1.600"/><path d="M830 331H1038.3" stroke="#5c5c64" stroke-width="1"/><path d="M834.2 377V394.5" stroke="#00a600" stroke-width=".9"/><rect x="832.2" y="380.5" width="4" height="14.0" fill="#fff"/><path d="M839.7 378.4V432.8" stroke="#00a600" stroke-width=".9"/><rect x="837.9" y="394.2" width="3.6" height="1.2" fill="#000" stroke="#00a600" stroke-width=".8"/><path d="M846.1 392V438.7" stroke="#00a600" stroke-width=".9"/><rect x="844.1" y="394.9" width="4" height="22.4" fill="#fff"/><path d="M852.4 406.6V438.7" stroke="#00a600" stroke-width=".9"/><rect x="850.4" y="417.9" width="4" height="13.0" fill="#fff"/><path d="M858.6 410.5V441.6" stroke="#00a600" stroke-width=".9"/><rect x="856.8" y="425.6" width="3.6" height="5.7" fill="#000" stroke="#00a600" stroke-width=".8"/><path d="M865 414.4V437.7" stroke="#00a600" stroke-width=".9"/><rect x="863.0" y="425" width="4" height="3.6" fill="#fff"/><path d="M871.2 402.7V432.8" stroke="#00a600" stroke-width=".9"/><rect x="869.4" y="418.2" width="3.6" height="9.8" fill="#000" stroke="#00a600" stroke-width=".8"/><path d="M877.7 410.5V423.1" stroke="#00a600" stroke-width=".9"/><rect x="875.9" y="414.4" width="3.6" height="4.8" fill="#000" stroke="#00a600" stroke-width=".8"/><path d="M884.1 395.5V414.4" stroke="#00a600" stroke-width=".9"/><rect x="882.1" y="407.2" width="4" height="2.7" fill="#fff"/><path d="M890.5 404V421.2" stroke="#00a600" stroke-width=".9"/><rect x="888.5" y="409.9" width="4" height="1.5" fill="#fff"/><path d="M896.7 356V428" stroke="#00a600" stroke-width=".9"/><rect x="894.9" y="365.1" width="3.6" height="45.9" fill="#000" stroke="#00a600" stroke-width=".8"/><path d="M903.2 360.9V376.4" stroke="#00a600" stroke-width=".9"/><rect x="901.2" y="365.1" width="4" height="7.8" fill="#fff"/><path d="M909.4 358.3V374.9" stroke="#00a600" stroke-width=".9"/><rect x="907.6" y="368.2" width="3.6" height="5.3" fill="#000" stroke="#00a600" stroke-width=".8"/><path d="M915.8 363.8V372.5" stroke="#00a600" stroke-width=".9"/><rect x="913.8" y="368.2" width="4" height="3.6" fill="#fff"/><path d="M922 369V384.2" stroke="#00a600" stroke-width=".9"/><rect x="920.0" y="371.8" width="4" height="9.5" fill="#fff"/><path d="M928.4 375.4V389" stroke="#00a600" stroke-width=".9"/><rect x="926.4" y="380.9" width="4" height="1.9" fill="#fff"/><path d="M934.9 377V392" stroke="#00a600" stroke-width=".9"/><rect x="933.1" y="379" width="3.6" height="3.8" fill="#000" stroke="#00a600" stroke-width=".8"/><path d="M941.1 375.4V400.7" stroke="#00a600" stroke-width=".9"/><rect x="939.1" y="379" width="4" height="10.0" fill="#fff"/><path d="M946.8 386V412" stroke="#00a600" stroke-width=".9"/><rect x="944.8" y="389" width="4" height="21.5" fill="#fff"/><path d="M978.7 364V376" stroke="#00a600" stroke-width=".9"/><rect x="976.9" y="368" width="3.6" height="4.0" fill="#000" stroke="#00a600" stroke-width=".8"/><path d="M985.6 330.5V374" stroke="#00a600" stroke-width=".9"/><rect x="983.8" y="358.3" width="3.6" height="11.1" fill="#000" stroke="#00a600" stroke-width=".8"/><path d="M991.6 347.5V369.4" stroke="#00a600" stroke-width=".9"/><rect x="989.6" y="358" width="4" height="2.0" fill="#fff"/><path d="M998 348.4V371" stroke="#00a600" stroke-width=".9"/><rect x="996.2" y="358.8" width="3.6" height="1.4" fill="#000" stroke="#00a600" stroke-width=".8"/><path d="M1003.8 330.5V362" stroke="#00a600" stroke-width=".9"/><rect x="1002.0" y="340.4" width="3.6" height="19.1" fill="#000" stroke="#00a600" stroke-width=".8"/><path d="M1010.7 328.4V342.5" stroke="#00a600" stroke-width=".9"/><rect x="1008.7" y="340" width="4" height="1.6" fill="#fff"/><path d="M1017 338V351.4" stroke="#00a600" stroke-width=".9"/><rect x="1015.0" y="341.6" width="4" height="5.9" fill="#fff"/><path d="M1023.6 328.4V350" stroke="#00a600" stroke-width=".9"/><rect x="1021.8" y="331" width="3.6" height="16.5" fill="#000" stroke="#00a600" stroke-width=".8"/></g><path d="M1038.3 80.8V502.8M830 502.8H1038.3" stroke="#b4b4b4" stroke-width=".9" fill="none"/><path d="M846.4 502.8v2.5" stroke="#c8c8c8" stroke-width=".8"/><path d="M871.8 502.8v1.5" stroke="#c8c8c8" stroke-width=".8"/><path d="M897.1 502.8v2.5" stroke="#c8c8c8" stroke-width=".8"/><path d="M922.5 502.8v1.5" stroke="#c8c8c8" stroke-width=".8"/><path d="M947.8 502.8v2.5" stroke="#c8c8c8" stroke-width=".8"/><path d="M973.2 502.8v1.5" stroke="#c8c8c8" stroke-width=".8"/><path d="M998.6 502.8v2.5" stroke="#c8c8c8" stroke-width=".8"/><path d="M1023.9 502.8v1.5" stroke="#c8c8c8" stroke-width=".8"/><path d="M1038.3 102.7h2" stroke="#e8e8e8" stroke-width=".8"/><path d="M1038.3 128.5h2" stroke="#e8e8e8" stroke-width=".8"/><path d="M1038.3 154.2h2" stroke="#e8e8e8" stroke-width=".8"/><path d="M1038.3 180.0h2" stroke="#e8e8e8" stroke-width=".8"/><path d="M1038.3 205.7h2" stroke="#e8e8e8" stroke-width=".8"/><path d="M1038.3 231.5h2" stroke="#e8e8e8" stroke-width=".8"/><path d="M1038.3 257.3h2" stroke="#e8e8e8" stroke-width=".8"/><path d="M1038.3 283.0h2" stroke="#e8e8e8" stroke-width=".8"/><path d="M1038.3 308.8h2" stroke="#e8e8e8" stroke-width=".8"/><path d="M1038.3 334.5h2" stroke="#e8e8e8" stroke-width=".8"/><path d="M1038.3 360.3h2" stroke="#e8e8e8" stroke-width=".8"/><path d="M1038.3 386.1h2" stroke="#e8e8e8" stroke-width=".8"/><path d="M1038.3 411.8h2" stroke="#e8e8e8" stroke-width=".8"/><path d="M1038.3 437.6h2" stroke="#e8e8e8" stroke-width=".8"/><path d="M1038.3 463.3h2" stroke="#e8e8e8" stroke-width=".8"/><path d="M1038.3 489.1h2" stroke="#e8e8e8" stroke-width=".8"/></svg>
<div class="pl" style="top:98.30px;line-height:12.2px;height:12.2px;font-size:8.2px;left:1041.50px;color:#fff;">5418.30</div>
<div class="pl" style="top:124.06px;line-height:12.2px;height:12.2px;font-size:8.2px;left:1041.50px;color:#fff;">5390.30</div>
<div class="pl" style="top:149.82px;line-height:12.2px;height:12.2px;font-size:8.2px;left:1041.50px;color:#fff;">5362.70</div>
<div class="pl" style="top:175.58px;line-height:12.2px;height:12.2px;font-size:8.2px;left:1041.50px;color:#fff;">5334.70</div>
<div class="pl" style="top:201.34px;line-height:12.2px;height:12.2px;font-size:8.2px;left:1041.50px;color:#fff;">5306.70</div>
<div class="pl" style="top:227.10px;line-height:12.2px;height:12.2px;font-size:8.2px;left:1041.50px;color:#fff;">5279.10</div>
<div class="pl" style="top:252.86px;line-height:12.2px;height:12.2px;font-size:8.2px;left:1041.50px;color:#fff;">5251.10</div>
<div class="pl" style="top:278.62px;line-height:12.2px;height:12.2px;font-size:8.2px;left:1041.50px;color:#fff;">5223.50</div>
<div class="pl" style="top:304.38px;line-height:12.2px;height:12.2px;font-size:8.2px;left:1041.50px;color:#fff;">5195.50</div>
<div class="pl" style="top:330.14px;line-height:12.2px;height:12.2px;font-size:8.2px;left:1041.50px;color:#fff;">5167.50</div>
<div class="pl" style="top:355.90px;line-height:12.2px;height:12.2px;font-size:8.2px;left:1041.50px;color:#fff;">5139.90</div>
<div class="pl" style="top:381.66px;line-height:12.2px;height:12.2px;font-size:8.2px;left:1041.50px;color:#fff;">5111.90</div>
<div class="pl" style="top:407.42px;line-height:12.2px;height:12.2px;font-size:8.2px;left:1041.50px;color:#fff;">5084.30</div>
<div class="pl" style="top:433.18px;line-height:12.2px;height:12.2px;font-size:8.2px;left:1041.50px;color:#fff;">5056.30</div>
<div class="pl" style="top:458.94px;line-height:12.2px;height:12.2px;font-size:8.2px;left:1041.50px;color:#fff;">5028.30</div>
<div class="pl" style="top:484.70px;line-height:12.2px;height:12.2px;font-size:8.2px;left:1041.50px;color:#fff;">5000.70</div>
<div style="left:1039.5px;top:326.3px;width:31px;height:9.4px;background:#fff;"></div>
<div style="top:326.00px;line-height:12.2px;height:12.2px;font-size:8.2px;left:1041.50px;color:#000;transform:scaleX(.87);transform-origin:0 50%;">5171.37</div>
<div style="top:504.10px;line-height:12.2px;height:12.2px;font-size:8.2px;left:845.80px;color:#fff;transform:scaleX(.9);transform-origin:0 50%;">5 Mar 18:00</div>
<div style="top:504.10px;line-height:12.2px;height:12.2px;font-size:8.2px;left:896.50px;color:#fff;transform:scaleX(.9);transform-origin:0 50%;">6 Mar 03:00</div>
<div style="top:504.10px;line-height:12.2px;height:12.2px;font-size:8.2px;left:947.20px;color:#fff;transform:scaleX(.9);transform-origin:0 50%;">6 Mar 11:00</div>
<div style="top:504.10px;line-height:12.2px;height:12.2px;font-size:8.2px;left:997.90px;color:#fff;transform:scaleX(.9);transform-origin:0 50%;">6 Mar 19:00</div>
<div style="top:82.10px;line-height:12.2px;height:12.2px;font-size:8.2px;right:56.00px;text-align:right;color:#fff;"><i style="font-size:8.3px;letter-spacing:-.33px">[eaclubshare.com]</i><span style="position:static;font-family:'Liberation Serif',serif;font-size:7.63px">新步步为赢稳定获利</span><i style="font-size:8.3px;letter-spacing:-.33px">EA</i></div>
<svg style="left:1027.2px;top:83.8px" width="9" height="9" viewBox="0 0 9 9"><circle cx="4.500" cy="4.500" r="3.900" fill="none" stroke="#fff" stroke-width=".7"/><circle cx="3.100" cy="3.500" r=".55" fill="#fff"/><circle cx="5.900" cy="3.500" r=".55" fill="#fff"/><path d="M2.500 5.500c1 1.400 3 1.400 4 0" stroke="#fff" stroke-width=".6" fill="none"/></svg>
<div class="bi" style="top:125.70px;line-height:13.2px;height:13.2px;font-size:9.2px;right:62.00px;text-align:right;"><i>0 %</i>:<span style="position:static;display:inline-block;width:6.5px"></span>预付比例</div>
<div class="bi" style="top:141.60px;line-height:13.2px;height:13.2px;font-size:9.2px;right:62.00px;text-align:right;"><i>0.00</i> 手:<span style="position:static;display:inline-block;width:6.5px"></span>多单手数</div>
<div class="bi" style="top:149.60px;line-height:13.2px;height:13.2px;font-size:9.2px;right:62.00px;text-align:right;"><i>0.00</i> 手:<span style="position:static;display:inline-block;width:6.5px"></span>空单手数</div>
<div class="pb " style="left:947.1px;top:372.1px;width:57px;height:9.5px;line-height:10.6px;background:#00bfff;color:#c8f2ff;font-size:8.6px;letter-spacing:.05px;">一键暂停</div>
<div class="pb " style="left:1006.5px;top:372.1px;width:27.3px;height:9.5px;line-height:10.6px;background:#1e90ff;color:#bfe4ff;font-size:9.4px;">清除变量</div>
<div class="pb " style="left:947.1px;top:384.2px;width:27.5px;height:9.5px;line-height:10.6px;background:#1e90ff;color:#b8e0ff;font-size:10.8px;">输入手数</div>
<div class="pb " style="left:976.9px;top:384.2px;width:27.2px;height:9.5px;line-height:10.6px;background:#1e90ff;color:#b8e0ff;font-size:10.8px;">挂单价格</div>
<div class="pb " style="left:1006.5px;top:384.2px;width:27.3px;height:9.5px;line-height:10.6px;background:#1e90ff;color:#b8e0ff;font-size:10.8px;">挂单间距</div>
<div class="pb n" style="left:947.1px;top:395.9px;width:27.5px;height:9.5px;line-height:11.799999999999999px;">0.10</div>
<div class="pb n" style="left:976.9px;top:395.9px;width:27.2px;height:9.5px;line-height:11.799999999999999px;">0.00</div>
<div class="pb n" style="left:1006.5px;top:395.9px;width:27.3px;height:9.5px;line-height:11.799999999999999px;">100</div>
<div class="pb " style="left:947.1px;top:408.0px;width:27.5px;height:9.5px;line-height:10.6px;background:#1e90ff;color:#b8e0ff;font-size:10.8px;">挂单笔数</div>
<div class="pb " style="left:976.9px;top:408.0px;width:27.2px;height:9.5px;line-height:10.6px;background:#1e90ff;color:#b8e0ff;font-size:10.8px;">止盈点数</div>
<div class="pb " style="left:1006.5px;top:408.0px;width:27.3px;height:9.5px;line-height:10.6px;background:#1e90ff;color:#b8e0ff;font-size:10.8px;">止损点数</div>
<div class="pb n" style="left:947.1px;top:419.7px;width:27.5px;height:9.5px;line-height:11.799999999999999px;">10</div>
<div class="pb n" style="left:976.9px;top:419.7px;width:27.2px;height:9.5px;line-height:11.799999999999999px;">0</div>
<div class="pb n" style="left:1006.5px;top:419.7px;width:27.3px;height:9.5px;line-height:11.799999999999999px;">0</div>
<div class="pb " style="left:947.1px;top:431.9px;width:27.5px;height:9.5px;line-height:10.6px;background:#1e90ff;color:#b8e0ff;font-size:10.8px;">止盈金额</div>
<div class="pb l" style="left:976.9px;top:431.9px;width:27.2px;height:9.5px;line-height:10.6px;background:#0000cd;">buystop</div>
<div class="pb l" style="left:1006.5px;top:431.9px;width:27.3px;height:9.5px;line-height:10.6px;background:#808080;">撤buystop</div>
<div class="pb n" style="left:947.1px;top:443.4px;width:27.5px;height:9.5px;line-height:11.799999999999999px;">100.00</div>
<div class="pb l" style="left:976.9px;top:443.4px;width:27.2px;height:9.5px;line-height:10.6px;background:#00bfff;">buylimit</div>
<div class="pb l" style="left:1006.5px;top:443.4px;width:27.3px;height:9.5px;line-height:10.6px;background:#808080;">撤buylimit</div>
<div class="pb " style="left:947.1px;top:455.5px;width:27.5px;height:9.5px;line-height:10.6px;background:#008000;color:#bfe8bf;font-size:10.2px;">一键做多</div>
<div class="pb l" style="left:976.9px;top:455.5px;width:27.2px;height:9.5px;line-height:10.6px;background:#c71585;">sellstop</div>
<div class="pb l" style="left:1006.5px;top:455.5px;width:27.3px;height:9.5px;line-height:10.6px;background:#808080;">撤sellstop</div>
<div class="pb " style="left:947.1px;top:467.2px;width:27.5px;height:9.5px;line-height:10.6px;background:#ff0000;color:#ffd0c8;font-size:10.2px;">一键做空</div>
<div class="pb l" style="left:976.9px;top:467.2px;width:27.2px;height:9.5px;line-height:10.6px;background:#ff69b4;">selllimit</div>
<div class="pb l" style="left:1006.5px;top:467.2px;width:27.3px;height:9.5px;line-height:10.6px;background:#808080;">撤selllimit</div>
<div class="pb " style="left:947.1px;top:479.1px;width:27.5px;height:9.5px;line-height:10.6px;background:#008000;color:#bfe8bf;font-size:10.2px;">一键平多</div>
<div class="pb " style="left:976.9px;top:479.1px;width:27.2px;height:9.5px;line-height:10.6px;background:#ffa500;color:#ffe8b0;font-size:10.2px;">一键全平</div>
<div class="pb " style="left:1006.5px;top:479.1px;width:27.3px;height:9.5px;line-height:10.6px;background:#ff69b4;color:#ffd8ec;font-size:10.2px;">一键平盈</div>
<div class="pb " style="left:947.1px;top:490.9px;width:27.5px;height:9.5px;line-height:10.6px;background:#ff0000;color:#ffd0c8;font-size:10.2px;">一键平空</div>
<div class="pb " style="left:976.9px;top:490.9px;width:27.2px;height:9.5px;line-height:10.6px;background:#8a2be2;color:#dcc4ff;font-size:10.2px;">一键平仓</div>
<div class="pb " style="left:1006.5px;top:490.9px;width:27.3px;height:9.5px;line-height:10.6px;background:#6495ed;color:#d4e4ff;font-size:10.2px;">一键平亏</div>
<div style="left:276.6px;top:8.3px;width:558.3px;height:651.2px;background:#f0f0f0;border-radius:5.5px;box-shadow:0 0 0 .6px rgba(100,100,100,.5),0 2px 8px rgba(0,0,0,.28),0 5px 7px rgba(0,0,0,.16),0 6px 20px rgba(0,0,0,.2);"></div>
<div style="left:276.6px;top:8.3px;width:558.3px;height:22px;background:#f3f3f3;border-radius:5.5px 5.5px 0 0;"></div>
<div style="top:14.70px;line-height:13.6px;height:13.6px;font-size:9.6px;left:282.40px;color:#1a1a1a;"><i style="font-size:9.7px;letter-spacing:-.2px">Expert - [eaclubshare.com]</i>新步步为赢稳定获利<i style="font-size:9.700px;letter-spacing:-.2px">EA</i></div>
<div style="top:14.80px;line-height:13.4px;height:13.4px;font-size:9.4px;left:778.00px;color:#222;">?</div>
<svg style="left:812.2px;top:15.7px" width="8.6" height="8.6" viewBox="0 0 8.6 8.6"><path d="M.4 .4l7.800 7.800M8.200 .4l-7.800 7.800" stroke="#2a2a2a" stroke-width="1"/></svg>
<div style="left:283.4px;top:55.8px;width:546.6px;height:575px;background:#f9f9f9;box-shadow:0 0 0 .6px #e3e3e3;"></div>
<div style="left:359px;top:37.8px;width:49.5px;height:18.5px;background:#f9f9f9;box-shadow:0 0 0 .6px #e3e3e3;clip-path:inset(-1px -1px .8px -1px);"></div>
<div style="left:284px;top:39.5px;width:37.5px;height:16px;background:#f3f3f3;box-shadow:0 0 0 .5px #e6e6e6;clip-path:inset(-1px -1px 0 -1px);"></div>
<div style="left:322px;top:39.5px;width:37px;height:16px;background:#f3f3f3;box-shadow:0 0 0 .5px #e6e6e6;clip-path:inset(-1px -1px 0 -1px);"></div>
<div style="top:43.05px;line-height:13.5px;height:13.5px;font-size:9.5px;left:288.80px;color:#111;">关于</div>
<div style="top:43.05px;line-height:13.5px;height:13.5px;font-size:9.5px;left:327.00px;color:#111;">常用</div>
<div style="top:40.95px;line-height:13.5px;height:13.5px;font-size:9.5px;left:364.80px;color:#111;">输入参数</div>
<svg width="0" height="0" style="left:0;top:0"><defs><linearGradient id="gy" x1="0" y1="0" x2="0" y2="1"><stop offset="0" stop-color="#f4ecac"/><stop offset=".55" stop-color="#ecdd78"/><stop offset="1" stop-color="#dfca4e"/></linearGradient><linearGradient id="gg" x1="0" y1="0" x2="0" y2="1"><stop offset="0" stop-color="#b6f2b6"/><stop offset=".55" stop-color="#7ee07e"/><stop offset="1" stop-color="#54cc54"/></linearGradient><linearGradient id="gb" x1="0" y1="0" x2="0" y2="1"><stop offset="0" stop-color="#c6eff5"/><stop offset=".55" stop-color="#8adae8"/><stop offset="1" stop-color="#62c8dc"/></linearGradient></defs></svg>
<div style="left:289.6px;top:60.8px;width:431.69999999999993px;height:565.5px;background:#fff;box-shadow:-.7px -.7px 0 0 #adb2ba,.7px .7px 0 0 #dcdcdc;overflow:hidden;"><div class="dr" style="left:2.7px;top:3.0px;line-height:14px">变量</div><div class="dr" style="left:210.8px;top:3.0px;line-height:14px">赋值</div><div style="left:207.4px;top:0.2px;width:0.8px;height:15.5px;background:#e6e6e6;"></div><div style="left:0px;top:15.6px;width:417.4px;height:15.555px;background:#e9e9e9;"></div><div style="left:207.2px;top:15.6px;width:1px;height:15.555px;background:#fff;"></div><svg style="left:1.2px;top:17.1px" width="13" height="13" viewBox="0 0 13 13"><path d="M1.200 .5h8.100l3.200 3.200v7.300c0 .6-.4 1-1 1l-1.300 0-.9 .8-.9-.8h-1.400l-.9 .8-.9-.8h-1.400l-.9 .8-.9-.8-1 0c-.6 0-1-.4-1-1v-9.500c0-.6.4-1 1-1z" fill="url(#gy)" stroke="#d6c250" stroke-width=".5"/><path d="M9.300 .5v3.200h3.200" fill="#faf5cc" stroke="#dccc64" stroke-width=".4"/><text x="1.500" y="8.600" font-family="Liberation Sans" font-size="6.800" font-weight="bold" letter-spacing="-.2" fill="#86761c">ab</text></svg><div class="dr" style="left:17.0px;top:16.9px;line-height:15.455px">功能隔离线<i>0</i></div><div class="dr" style="left:211.2px;top:16.9px;line-height:15.455px;width:204.60000000000002px;overflow:hidden"><i style="letter-spacing:.6px">* </i><i style="letter-spacing:.69px;color:#333">============================</i><i>...</i></div><div style="left:0px;top:31.06px;width:417.4px;height:15.555px;background:#fff;"></div><div style="left:207.2px;top:31.06px;width:1px;height:15.555px;background:#f1f1f1;"></div><svg style="left:1.2px;top:32.56px" width="13" height="13" viewBox="0 0 13 13"><path d="M1.200 .5h8.100l3.200 3.200v7.300c0 .6-.4 1-1 1l-1.300 0-.9 .8-.9-.8h-1.400l-.9 .8-.9-.8h-1.400l-.9 .8-.9-.8-1 0c-.6 0-1-.4-1-1v-9.500c0-.6.4-1 1-1z" fill="url(#gy)" stroke="#d6c250" stroke-width=".5"/><path d="M9.300 .5v3.200h3.200" fill="#faf5cc" stroke="#dccc64" stroke-width=".4"/><text x="1.500" y="8.600" font-family="Liberation Sans" font-size="6.800" font-weight="bold" letter-spacing="-.2" fill="#86761c">ab</text></svg><div class="dr" style="left:17.0px;top:32.36px;line-height:15.455px">以下是基本参数设置</div><div class="dr" style="left:211.2px;top:32.36px;line-height:15.455px;width:204.60000000000002px;overflow:hidden"><i>*</i> 以下是基本参数设置 <i>*</i></div><div style="left:0px;top:46.51px;width:417.4px;height:15.555px;background:#e9e9e9;"></div><div style="left:207.2px;top:46.51px;width:1px;height:15.555px;background:#fff;"></div><svg style="left:1.2px;top:48.01px" width="13" height="13" viewBox="0 0 13 13"><path d="M1.200 .5h8.100l3.200 3.200v7.300c0 .6-.4 1-1 1l-1.300 0-.9 .8-.9-.8h-1.400l-.9 .8-.9-.8h-1.400l-.9 .8-.9-.8-1 0c-.6 0-1-.4-1-1v-9.500c0-.6.4-1 1-1z" fill="url(#gy)" stroke="#d6c250" stroke-width=".5"/><path d="M9.300 .5v3.200h3.200" fill="#faf5cc" stroke="#dccc64" stroke-width=".4"/><text x="1.500" y="8.600" font-family="Liberation Sans" font-size="6.800" font-weight="bold" letter-spacing="-.2" fill="#86761c">ab</text></svg><div class="dr" style="left:17.0px;top:47.81px;line-height:15.455px">按净值自动确定开仓起始手数</div><div class="dr" style="left:211.2px;top:47.81px;line-height:15.455px;width:204.60000000000002px;overflow:hidden"><i>*</i>以下按<i>500</i>倍杠杆和净值自定开仓手数<i>*</i></div><div style="left:0px;top:61.97px;width:417.4px;height:15.555px;background:#fff;"></div><div style="left:207.2px;top:61.97px;width:1px;height:15.555px;background:#f1f1f1;"></div><svg style="left:1.2px;top:63.47px" width="13" height="13" viewBox="0 0 13 13"><path d="M1.200 .5h8.100l3.200 3.200v7.300c0 .6-.4 1-1 1l-1.300 0-.9 .8-.9-.8h-1.400l-.9 .8-.9-.8h-1.400l-.9 .8-.9-.8-1 0c-.6 0-1-.4-1-1v-9.500c0-.6.4-1 1-1z" fill="url(#gg)" stroke="#48c048" stroke-width=".5"/><path d="M9.300 .5v3.200h3.200" fill="#dcf8dc" stroke="#6cd06c" stroke-width=".4"/><path d="M2.200 7.800l3.800-3.300M6.200 6.600l3 .5" stroke="#1f9636" stroke-width="1.300" fill="none" stroke-linecap="round"/></svg><div class="dr" style="left:17.0px;top:63.27px;line-height:15.455px">按净值大小自动确定开仓起始手数</div><div class="dr" style="left:211.2px;top:63.27px;line-height:15.455px;width:204.60000000000002px;overflow:hidden"><i>false</i></div><div style="left:0px;top:77.42px;width:417.4px;height:15.555px;background:#e9e9e9;"></div><div style="left:207.2px;top:77.42px;width:1px;height:15.555px;background:#fff;"></div><svg style="left:1.2px;top:78.92px" width="13" height="13" viewBox="0 0 13 13"><path d="M1.200 .5h8.100l3.200 3.200v7.300c0 .6-.4 1-1 1l-1.300 0-.9 .8-.9-.8h-1.400l-.9 .8-.9-.8h-1.400l-.9 .8-.9-.8-1 0c-.6 0-1-.4-1-1v-9.500c0-.6.4-1 1-1z" fill="url(#gb)" stroke="#5cbcd8" stroke-width=".5"/><path d="M9.300 .5v3.200h3.200" fill="#e0f6fc" stroke="#7ccce4" stroke-width=".4"/><path d="M2 4.200l1.200-.9v4.500M4.500 8l2.300-5.200" stroke="#3a94b4" stroke-width=".9" fill="none"/><path d="M7 5.900c.5-1 2-.8 1.900 .3c0 .8-1.100 1.200-1.900 2.100h2.100" stroke="#3a94b4" stroke-width=".8" fill="none"/></svg><div class="dr" style="left:17.0px;top:78.72px;line-height:15.455px">净值小于<i>1000</i>的起始手数</div><div class="dr" style="left:211.2px;top:78.72px;line-height:15.455px;width:204.60000000000002px;overflow:hidden"><i>0.01</i></div><div style="left:0px;top:92.88px;width:417.4px;height:15.555px;background:#fff;"></div><div style="left:207.2px;top:92.88px;width:1px;height:15.555px;background:#f1f1f1;"></div><svg style="left:1.2px;top:94.38px" width="13" height="13" viewBox="0 0 13 13"><path d="M1.200 .5h8.100l3.200 3.200v7.300c0 .6-.4 1-1 1l-1.300 0-.9 .8-.9-.8h-1.400l-.9 .8-.9-.8h-1.400l-.9 .8-.9-.8-1 0c-.6 0-1-.4-1-1v-9.500c0-.6.4-1 1-1z" fill="url(#gb)" stroke="#5cbcd8" stroke-width=".5"/><path d="M9.300 .5v3.200h3.200" fill="#e0f6fc" stroke="#7ccce4" stroke-width=".4"/><path d="M2 4.200l1.200-.9v4.500M4.500 8l2.300-5.200" stroke="#3a94b4" stroke-width=".9" fill="none"/><path d="M7 5.900c.5-1 2-.8 1.900 .3c0 .8-1.100 1.200-1.900 2.100h2.100" stroke="#3a94b4" stroke-width=".8" fill="none"/></svg><div class="dr" style="left:17.0px;top:94.18px;line-height:15.455px">净值小于<i>2000</i>大于<i>1000</i>的起始手数</div><div class="dr" style="left:211.2px;top:94.18px;line-height:15.455px;width:204.60000000000002px;overflow:hidden"><i>0.01</i></div><div style="left:0px;top:108.33px;width:417.4px;height:15.555px;background:#e9e9e9;"></div><div style="left:207.2px;top:108.33px;width:1px;height:15.555px;background:#fff;"></div><svg style="left:1.2px;top:109.83px" width="13" height="13" viewBox="0 0 13 13"><path d="M1.200 .5h8.100l3.200 3.200v7.300c0 .6-.4 1-1 1l-1.300 0-.9 .8-.9-.8h-1.400l-.9 .8-.9-.8h-1.400l-.9 .8-.9-.8-1 0c-.6 0-1-.4-1-1v-9.500c0-.6.4-1 1-1z" fill="url(#gb)" stroke="#5cbcd8" stroke-width=".5"/><path d="M9.300 .5v3.200h3.200" fill="#e0f6fc" stroke="#7ccce4" stroke-width=".4"/><path d="M2 4.200l1.200-.9v4.500M4.500 8l2.300-5.200" stroke="#3a94b4" stroke-width=".9" fill="none"/><path d="M7 5.900c.5-1 2-.8 1.900 .3c0 .8-1.100 1.200-1.900 2.100h2.100" stroke="#3a94b4" stroke-width=".8" fill="none"/></svg><div class="dr" style="left:17.0px;top:109.63px;line-height:15.455px">净值小于<i>3000</i>大于<i>2000</i>的起始手数</div><div class="dr" style="left:211.2px;top:109.63px;line-height:15.455px;width:204.60000000000002px;overflow:hidden"><i>0.02</i></div><div style="left:0px;top:123.79px;width:417.4px;height:15.555px;background:#fff;"></div><div style="left:207.2px;top:123.79px;width:1px;height:15.555px;background:#f1f1f1;"></div><svg style="left:1.2px;top:125.29px" width="13" height="13" viewBox="0 0 13 13"><path d="M1.200 .5h8.100l3.200 3.200v7.300c0 .6-.4 1-1 1l-1.300 0-.9 .8-.9-.8h-1.400l-.9 .8-.9-.8h-1.400l-.9 .8-.9-.8-1 0c-.6 0-1-.4-1-1v-9.500c0-.6.4-1 1-1z" fill="url(#gb)" stroke="#5cbcd8" stroke-width=".5"/><path d="M9.300 .5v3.200h3.200" fill="#e0f6fc" stroke="#7ccce4" stroke-width=".4"/><path d="M2 4.200l1.200-.9v4.500M4.500 8l2.300-5.200" stroke="#3a94b4" stroke-width=".9" fill="none"/><path d="M7 5.900c.5-1 2-.8 1.900 .3c0 .8-1.100 1.200-1.900 2.100h2.100" stroke="#3a94b4" stroke-width=".8" fill="none"/></svg><div class="dr" style="left:17.0px;top:125.09px;line-height:15.455px">净值小于<i>4000</i>大于<i>3000</i>的起始手数</div><div class="dr" style="left:211.2px;top:125.09px;line-height:15.455px;width:204.60000000000002px;overflow:hidden"><i>0.03</i></div><div style="left:0px;top:139.24px;width:417.4px;height:15.555px;background:#e9e9e9;"></div><div style="left:207.2px;top:139.24px;width:1px;height:15.555px;background:#fff;"></div><svg style="left:1.2px;top:140.74px" width="13" height="13" viewBox="0 0 13 13"><path d="M1.200 .5h8.100l3.200 3.200v7.300c0 .6-.4 1-1 1l-1.300 0-.9 .8-.9-.8h-1.400l-.9 .8-.9-.8h-1.400l-.9 .8-.9-.8-1 0c-.6 0-1-.4-1-1v-9.500c0-.6.4-1 1-1z" fill="url(#gb)" stroke="#5cbcd8" stroke-width=".5"/><path d="M9.300 .5v3.200h3.200" fill="#e0f6fc" stroke="#7ccce4" stroke-width=".4"/><path d="M2 4.200l1.200-.9v4.500M4.500 8l2.300-5.200" stroke="#3a94b4" stroke-width=".9" fill="none"/><path d="M7 5.900c.5-1 2-.8 1.900 .3c0 .8-1.100 1.200-1.900 2.100h2.100" stroke="#3a94b4" stroke-width=".8" fill="none"/></svg><div class="dr" style="left:17.0px;top:140.54px;line-height:15.455px">净值小于<i>5000</i>大于<i>4000</i>的起始手数</div><div class="dr" style="left:211.2px;top:140.54px;line-height:15.455px;width:204.60000000000002px;overflow:hidden"><i>0.04</i></div><div style="left:0px;top:154.69px;width:417.4px;height:15.555px;background:#fff;"></div><div style="left:207.2px;top:154.69px;width:1px;height:15.555px;background:#f1f1f1;"></div><svg style="left:1.2px;top:156.19px" width="13" height="13" viewBox="0 0 13 13"><path d="M1.200 .5h8.100l3.200 3.200v7.300c0 .6-.4 1-1 1l-1.300 0-.9 .8-.9-.8h-1.400l-.9 .8-.9-.8h-1.400l-.9 .8-.9-.8-1 0c-.6 0-1-.4-1-1v-9.500c0-.6.4-1 1-1z" fill="url(#gb)" stroke="#5cbcd8" stroke-width=".5"/><path d="M9.300 .5v3.200h3.200" fill="#e0f6fc" stroke="#7ccce4" stroke-width=".4"/><path d="M2 4.200l1.200-.9v4.500M4.500 8l2.300-5.200" stroke="#3a94b4" stroke-width=".9" fill="none"/><path d="M7 5.900c.5-1 2-.8 1.900 .3c0 .8-1.100 1.200-1.900 2.100h2.100" stroke="#3a94b4" stroke-width=".8" fill="none"/></svg><div class="dr" style="left:17.0px;top:156.0px;line-height:15.455px">净值小于<i>6000</i>大于<i>5000</i>的起始手数</div><div class="dr" style="left:211.2px;top:156.0px;line-height:15.455px;width:204.60000000000002px;overflow:hidden"><i>0.05</i></div><div style="left:0px;top:170.15px;width:417.4px;height:15.555px;background:#e9e9e9;"></div><div style="left:207.2px;top:170.15px;width:1px;height:15.555px;background:#fff;"></div><svg style="left:1.2px;top:171.65px" width="13" height="13" viewBox="0 0 13 13"><path d="M1.200 .5h8.100l3.200 3.200v7.300c0 .6-.4 1-1 1l-1.300 0-.9 .8-.9-.8h-1.400l-.9 .8-.9-.8h-1.400l-.9 .8-.9-.8-1 0c-.6 0-1-.4-1-1v-9.500c0-.6.4-1 1-1z" fill="url(#gb)" stroke="#5cbcd8" stroke-width=".5"/><path d="M9.300 .5v3.200h3.200" fill="#e0f6fc" stroke="#7ccce4" stroke-width=".4"/><path d="M2 4.200l1.200-.9v4.500M4.500 8l2.300-5.200" stroke="#3a94b4" stroke-width=".9" fill="none"/><path d="M7 5.900c.5-1 2-.8 1.900 .3c0 .8-1.100 1.200-1.900 2.100h2.100" stroke="#3a94b4" stroke-width=".8" fill="none"/></svg><div class="dr" style="left:17.0px;top:171.45px;line-height:15.455px">净值小于<i>7000</i>大于<i>6000</i>的起始手数</div><div class="dr" style="left:211.2px;top:171.45px;line-height:15.455px;width:204.60000000000002px;overflow:hidden"><i>0.06</i></div><div style="left:0px;top:185.61px;width:417.4px;height:15.555px;background:#fff;"></div><div style="left:207.2px;top:185.61px;width:1px;height:15.555px;background:#f1f1f1;"></div><svg style="left:1.2px;top:187.11px" width="13" height="13" viewBox="0 0 13 13"><path d="M1.200 .5h8.100l3.200 3.200v7.300c0 .6-.4 1-1 1l-1.300 0-.9 .8-.9-.8h-1.400l-.9 .8-.9-.8h-1.400l-.9 .8-.9-.8-1 0c-.6 0-1-.4-1-1v-9.500c0-.6.4-1 1-1z" fill="url(#gb)" stroke="#5cbcd8" stroke-width=".5"/><path d="M9.300 .5v3.200h3.200" fill="#e0f6fc" stroke="#7ccce4" stroke-width=".4"/><path d="M2 4.200l1.200-.9v4.500M4.500 8l2.300-5.200" stroke="#3a94b4" stroke-width=".9" fill="none"/><path d="M7 5.900c.5-1 2-.8 1.900 .3c0 .8-1.100 1.200-1.900 2.100h2.100" stroke="#3a94b4" stroke-width=".8" fill="none"/></svg><div class="dr" style="left:17.0px;top:186.91px;line-height:15.455px">净值小于<i>8000</i>大于<i>7000</i>的起始手数</div><div class="dr" style="left:211.2px;top:186.91px;line-height:15.455px;width:204.60000000000002px;overflow:hidden"><i>0.07</i></div><div style="left:0px;top:201.06px;width:417.4px;height:15.555px;background:#e9e9e9;"></div><div style="left:207.2px;top:201.06px;width:1px;height:15.555px;background:#fff;"></div><svg style="left:1.2px;top:202.56px" width="13" height="13" viewBox="0 0 13 13"><path d="M1.200 .5h8.100l3.200 3.200v7.300c0 .6-.4 1-1 1l-1.300 0-.9 .8-.9-.8h-1.400l-.9 .8-.9-.8h-1.400l-.9 .8-.9-.8-1 0c-.6 0-1-.4-1-1v-9.500c0-.6.4-1 1-1z" fill="url(#gb)" stroke="#5cbcd8" stroke-width=".5"/><path d="M9.300 .5v3.200h3.200" fill="#e0f6fc" stroke="#7ccce4" stroke-width=".4"/><path d="M2 4.200l1.200-.9v4.500M4.500 8l2.300-5.200" stroke="#3a94b4" stroke-width=".9" fill="none"/><path d="M7 5.900c.5-1 2-.8 1.900 .3c0 .8-1.100 1.200-1.900 2.100h2.100" stroke="#3a94b4" stroke-width=".8" fill="none"/></svg><div class="dr" style="left:17.0px;top:202.36px;line-height:15.455px">净值小于<i>9000</i>大于<i>8000</i>的起始手数</div><div class="dr" style="left:211.2px;top:202.36px;line-height:15.455px;width:204.60000000000002px;overflow:hidden"><i>0.08</i></div><div style="left:0px;top:216.51px;width:417.4px;height:15.555px;background:#fff;"></div><div style="left:207.2px;top:216.51px;width:1px;height:15.555px;background:#f1f1f1;"></div><svg style="left:1.2px;top:218.01px" width="13" height="13" viewBox="0 0 13 13"><path d="M1.200 .5h8.100l3.200 3.200v7.300c0 .6-.4 1-1 1l-1.300 0-.9 .8-.9-.8h-1.400l-.9 .8-.9-.8h-1.400l-.9 .8-.9-.8-1 0c-.6 0-1-.4-1-1v-9.500c0-.6.4-1 1-1z" fill="url(#gb)" stroke="#5cbcd8" stroke-width=".5"/><path d="M9.300 .5v3.200h3.200" fill="#e0f6fc" stroke="#7ccce4" stroke-width=".4"/><path d="M2 4.200l1.200-.9v4.500M4.500 8l2.300-5.200" stroke="#3a94b4" stroke-width=".9" fill="none"/><path d="M7 5.900c.5-1 2-.8 1.900 .3c0 .8-1.100 1.200-1.900 2.100h2.100" stroke="#3a94b4" stroke-width=".8" fill="none"/></svg><div class="dr" style="left:17.0px;top:217.81px;line-height:15.455px">净值小于<i>10000</i>大于<i>9000</i>的起始手数</div><div class="dr" style="left:211.2px;top:217.81px;line-height:15.455px;width:204.60000000000002px;overflow:hidden"><i>0.09</i></div><div style="left:0px;top:231.97px;width:417.4px;height:15.555px;background:#e9e9e9;"></div><div style="left:207.2px;top:231.97px;width:1px;height:15.555px;background:#fff;"></div><svg style="left:1.2px;top:233.47px" width="13" height="13" viewBox="0 0 13 13"><path d="M1.200 .5h8.100l3.200 3.200v7.300c0 .6-.4 1-1 1l-1.300 0-.9 .8-.9-.8h-1.400l-.9 .8-.9-.8h-1.400l-.9 .8-.9-.8-1 0c-.6 0-1-.4-1-1v-9.500c0-.6.4-1 1-1z" fill="url(#gb)" stroke="#5cbcd8" stroke-width=".5"/><path d="M9.300 .5v3.200h3.200" fill="#e0f6fc" stroke="#7ccce4" stroke-width=".4"/><path d="M2 4.200l1.200-.9v4.500M4.500 8l2.300-5.200" stroke="#3a94b4" stroke-width=".9" fill="none"/><path d="M7 5.900c.5-1 2-.8 1.900 .3c0 .8-1.100 1.200-1.900 2.100h2.100" stroke="#3a94b4" stroke-width=".8" fill="none"/></svg><div class="dr" style="left:17.0px;top:233.27px;line-height:15.455px">净值小于<i>12000</i>大于<i>10000</i>起始手数</div><div class="dr" style="left:211.2px;top:233.27px;line-height:15.455px;width:204.60000000000002px;overflow:hidden"><i>0.1</i></div><div style="left:0px;top:247.43px;width:417.4px;height:15.555px;background:#fff;"></div><div style="left:207.2px;top:247.43px;width:1px;height:15.555px;background:#f1f1f1;"></div><svg style="left:1.2px;top:248.93px" width="13" height="13" viewBox="0 0 13 13"><path d="M1.200 .5h8.100l3.200 3.200v7.300c0 .6-.4 1-1 1l-1.300 0-.9 .8-.9-.8h-1.400l-.9 .8-.9-.8h-1.400l-.9 .8-.9-.8-1 0c-.6 0-1-.4-1-1v-9.500c0-.6.4-1 1-1z" fill="url(#gb)" stroke="#5cbcd8" stroke-width=".5"/><path d="M9.300 .5v3.200h3.200" fill="#e0f6fc" stroke="#7ccce4" stroke-width=".4"/><path d="M2 4.200l1.200-.9v4.500M4.500 8l2.300-5.200" stroke="#3a94b4" stroke-width=".9" fill="none"/><path d="M7 5.900c.5-1 2-.8 1.900 .3c0 .8-1.100 1.200-1.900 2.100h2.100" stroke="#3a94b4" stroke-width=".8" fill="none"/></svg><div class="dr" style="left:17.0px;top:248.73px;line-height:15.455px">净值小于<i>14000</i>大于<i>12000</i>起始手数</div><div class="dr" style="left:211.2px;top:248.73px;line-height:15.455px;width:204.60000000000002px;overflow:hidden"><i>0.12</i></div><div style="left:0px;top:262.88px;width:417.4px;height:15.555px;background:#e9e9e9;"></div><div style="left:207.2px;top:262.88px;width:1px;height:15.555px;background:#fff;"></div><svg style="left:1.2px;top:264.38px" width="13" height="13" viewBox="0 0 13 13"><path d="M1.200 .5h8.100l3.200 3.200v7.300c0 .6-.4 1-1 1l-1.300 0-.9 .8-.9-.8h-1.400l-.9 .8-.9-.8h-1.400l-.9 .8-.9-.8-1 0c-.6 0-1-.4-1-1v-9.500c0-.6.4-1 1-1z" fill="url(#gb)" stroke="#5cbcd8" stroke-width=".5"/><path d="M9.300 .5v3.200h3.200" fill="#e0f6fc" stroke="#7ccce4" stroke-width=".4"/><path d="M2 4.200l1.200-.9v4.500M4.500 8l2.300-5.200" stroke="#3a94b4" stroke-width=".9" fill="none"/><path d="M7 5.900c.5-1 2-.8 1.900 .3c0 .8-1.100 1.200-1.900 2.100h2.100" stroke="#3a94b4" stroke-width=".8" fill="none"/></svg><div class="dr" style="left:17.0px;top:264.18px;line-height:15.455px">净值小于<i>16000</i>大于<i>14000</i>起始手数</div><div class="dr" style="left:211.2px;top:264.18px;line-height:15.455px;width:204.60000000000002px;overflow:hidden"><i>0.14</i></div><div style="left:0px;top:278.33px;width:417.4px;height:15.555px;background:#fff;"></div><div style="left:207.2px;top:278.33px;width:1px;height:15.555px;background:#f1f1f1;"></div><svg style="left:1.2px;top:279.83px" width="13" height="13" viewBox="0 0 13 13"><path d="M1.200 .5h8.100l3.200 3.200v7.300c0 .6-.4 1-1 1l-1.300 0-.9 .8-.9-.8h-1.400l-.9 .8-.9-.8h-1.400l-.9 .8-.9-.8-1 0c-.6 0-1-.4-1-1v-9.500c0-.6.4-1 1-1z" fill="url(#gb)" stroke="#5cbcd8" stroke-width=".5"/><path d="M9.300 .5v3.200h3.200" fill="#e0f6fc" stroke="#7ccce4" stroke-width=".4"/><path d="M2 4.200l1.200-.9v4.500M4.500 8l2.300-5.200" stroke="#3a94b4" stroke-width=".9" fill="none"/><path d="M7 5.900c.5-1 2-.8 1.900 .3c0 .8-1.100 1.200-1.900 2.100h2.100" stroke="#3a94b4" stroke-width=".8" fill="none"/></svg><div class="dr" style="left:17.0px;top:279.63px;line-height:15.455px">净值小于<i>18000</i>大于<i>16000</i>起始手数</div><div class="dr" style="left:211.2px;top:279.63px;line-height:15.455px;width:204.60000000000002px;overflow:hidden"><i>0.16</i></div><div style="left:0px;top:293.79px;width:417.4px;height:15.555px;background:#e9e9e9;"></div><div style="left:207.2px;top:293.79px;width:1px;height:15.555px;background:#fff;"></div><svg style="left:1.2px;top:295.29px" width="13" height="13" viewBox="0 0 13 13"><path d="M1.200 .5h8.100l3.200 3.200v7.300c0 .6-.4 1-1 1l-1.300 0-.9 .8-.9-.8h-1.400l-.9 .8-.9-.8h-1.400l-.9 .8-.9-.8-1 0c-.6 0-1-.4-1-1v-9.500c0-.6.4-1 1-1z" fill="url(#gb)" stroke="#5cbcd8" stroke-width=".5"/><path d="M9.300 .5v3.200h3.200" fill="#e0f6fc" stroke="#7ccce4" stroke-width=".4"/><path d="M2 4.200l1.200-.9v4.500M4.500 8l2.300-5.200" stroke="#3a94b4" stroke-width=".9" fill="none"/><path d="M7 5.900c.5-1 2-.8 1.900 .3c0 .8-1.100 1.200-1.900 2.100h2.100" stroke="#3a94b4" stroke-width=".8" fill="none"/></svg><div class="dr" style="left:17.0px;top:295.09px;line-height:15.455px">净值小于<i>20000</i>大于<i>18000</i>起始手数</div><div class="dr" style="left:211.2px;top:295.09px;line-height:15.455px;width:204.60000000000002px;overflow:hidden"><i>0.18</i></div><div style="left:0px;top:309.24px;width:417.4px;height:15.555px;background:#fff;"></div><div style="left:207.2px;top:309.24px;width:1px;height:15.555px;background:#f1f1f1;"></div><svg style="left:1.2px;top:310.74px" width="13" height="13" viewBox="0 0 13 13"><path d="M1.200 .5h8.100l3.200 3.200v7.300c0 .6-.4 1-1 1l-1.300 0-.9 .8-.9-.8h-1.400l-.9 .8-.9-.8h-1.400l-.9 .8-.9-.8-1 0c-.6 0-1-.4-1-1v-9.500c0-.6.4-1 1-1z" fill="url(#gb)" stroke="#5cbcd8" stroke-width=".5"/><path d="M9.300 .5v3.200h3.200" fill="#e0f6fc" stroke="#7ccce4" stroke-width=".4"/><path d="M2 4.200l1.200-.9v4.500M4.500 8l2.300-5.200" stroke="#3a94b4" stroke-width=".9" fill="none"/><path d="M7 5.900c.5-1 2-.8 1.900 .3c0 .8-1.100 1.200-1.900 2.100h2.100" stroke="#3a94b4" stroke-width=".8" fill="none"/></svg><div class="dr" style="left:17.0px;top:310.54px;line-height:15.455px">净值小于<i>25000</i>大于<i>20000</i>起始手数</div><div class="dr" style="left:211.2px;top:310.54px;line-height:15.455px;width:204.60000000000002px;overflow:hidden"><i>0.2</i></div><div style="left:0px;top:324.7px;width:417.4px;height:15.555px;background:#e9e9e9;"></div><div style="left:207.2px;top:324.7px;width:1px;height:15.555px;background:#fff;"></div><svg style="left:1.2px;top:326.2px" width="13" height="13" viewBox="0 0 13 13"><path d="M1.200 .5h8.100l3.200 3.200v7.300c0 .6-.4 1-1 1l-1.300 0-.9 .8-.9-.8h-1.400l-.9 .8-.9-.8h-1.400l-.9 .8-.9-.8-1 0c-.6 0-1-.4-1-1v-9.500c0-.6.4-1 1-1z" fill="url(#gb)" stroke="#5cbcd8" stroke-width=".5"/><path d="M9.300 .5v3.200h3.200" fill="#e0f6fc" stroke="#7ccce4" stroke-width=".4"/><path d="M2 4.200l1.200-.9v4.500M4.500 8l2.300-5.200" stroke="#3a94b4" stroke-width=".9" fill="none"/><path d="M7 5.900c.5-1 2-.8 1.900 .3c0 .8-1.100 1.200-1.900 2.100h2.100" stroke="#3a94b4" stroke-width=".8" fill="none"/></svg><div class="dr" style="left:17.0px;top:326.0px;line-height:15.455px">净值小于<i>30000</i>大于<i>25000</i>起始手数</div><div class="dr" style="left:211.2px;top:326.0px;line-height:15.455px;width:204.60000000000002px;overflow:hidden"><i>0.25</i></div><div style="left:0px;top:340.16px;width:417.4px;height:15.555px;background:#fff;"></div><div style="left:207.2px;top:340.16px;width:1px;height:15.555px;background:#f1f1f1;"></div><svg style="left:1.2px;top:341.66px" width="13" height="13" viewBox="0 0 13 13"><path d="M1.200 .5h8.100l3.200 3.200v7.300c0 .6-.4 1-1 1l-1.300 0-.9 .8-.9-.8h-1.400l-.9 .8-.9-.8h-1.400l-.9 .8-.9-.8-1 0c-.6 0-1-.4-1-1v-9.500c0-.6.4-1 1-1z" fill="url(#gb)" stroke="#5cbcd8" stroke-width=".5"/><path d="M9.300 .5v3.200h3.200" fill="#e0f6fc" stroke="#7ccce4" stroke-width=".4"/><path d="M2 4.200l1.200-.9v4.500M4.500 8l2.300-5.200" stroke="#3a94b4" stroke-width=".9" fill="none"/><path d="M7 5.900c.5-1 2-.8 1.900 .3c0 .8-1.100 1.200-1.900 2.100h2.100" stroke="#3a94b4" stroke-width=".8" fill="none"/></svg><div class="dr" style="left:17.0px;top:341.46px;line-height:15.455px">净值小于<i>5</i>万大于<i>3</i>万的起始手数</div><div class="dr" style="left:211.2px;top:341.46px;line-height:15.455px;width:204.60000000000002px;overflow:hidden"><i>0.3</i></div><div style="left:0px;top:355.61px;width:417.4px;height:15.555px;background:#e9e9e9;"></div><div style="left:207.2px;top:355.61px;width:1px;height:15.555px;background:#fff;"></div><svg style="left:1.2px;top:357.11px" width="13" height="13" viewBox="0 0 13 13"><path d="M1.200 .5h8.100l3.200 3.200v7.300c0 .6-.4 1-1 1l-1.300 0-.9 .8-.9-.8h-1.400l-.9 .8-.9-.8h-1.400l-.9 .8-.9-.8-1 0c-.6 0-1-.4-1-1v-9.500c0-.6.4-1 1-1z" fill="url(#gb)" stroke="#5cbcd8" stroke-width=".5"/><path d="M9.300 .5v3.200h3.200" fill="#e0f6fc" stroke="#7ccce4" stroke-width=".4"/><path d="M2 4.200l1.200-.9v4.500M4.500 8l2.300-5.200" stroke="#3a94b4" stroke-width=".9" fill="none"/><path d="M7 5.900c.5-1 2-.8 1.900 .3c0 .8-1.100 1.200-1.900 2.100h2.100" stroke="#3a94b4" stroke-width=".8" fill="none"/></svg><div class="dr" style="left:17.0px;top:356.91px;line-height:15.455px">净值小于<i>8</i>万大于<i>5</i>万起始手数</div><div class="dr" style="left:211.2px;top:356.91px;line-height:15.455px;width:204.60000000000002px;overflow:hidden"><i>0.5</i></div><div style="left:0px;top:371.06px;width:417.4px;height:15.555px;background:#fff;"></div><div style="left:207.2px;top:371.06px;width:1px;height:15.555px;background:#f1f1f1;"></div><svg style="left:1.2px;top:372.56px" width="13" height="13" viewBox="0 0 13 13"><path d="M1.200 .5h8.100l3.200 3.200v7.300c0 .6-.4 1-1 1l-1.300 0-.9 .8-.9-.8h-1.400l-.9 .8-.9-.8h-1.400l-.9 .8-.9-.8-1 0c-.6 0-1-.4-1-1v-9.500c0-.6.4-1 1-1z" fill="url(#gb)" stroke="#5cbcd8" stroke-width=".5"/><path d="M9.300 .5v3.200h3.200" fill="#e0f6fc" stroke="#7ccce4" stroke-width=".4"/><path d="M2 4.200l1.200-.9v4.500M4.500 8l2.300-5.200" stroke="#3a94b4" stroke-width=".9" fill="none"/><path d="M7 5.900c.5-1 2-.8 1.900 .3c0 .8-1.100 1.200-1.900 2.100h2.100" stroke="#3a94b4" stroke-width=".8" fill="none"/></svg><div class="dr" style="left:17.0px;top:372.37px;line-height:15.455px">净值小于<i>10</i>万大于<i>8</i>万起始手数</div><div class="dr" style="left:211.2px;top:372.37px;line-height:15.455px;width:204.60000000000002px;overflow:hidden"><i>0.8</i></div><div style="left:0px;top:386.52px;width:417.4px;height:15.555px;background:#e9e9e9;"></div><div style="left:207.2px;top:386.52px;width:1px;height:15.555px;background:#fff;"></div><svg style="left:1.2px;top:388.02px" width="13" height="13" viewBox="0 0 13 13"><path d="M1.200 .5h8.100l3.200 3.200v7.300c0 .6-.4 1-1 1l-1.300 0-.9 .8-.9-.8h-1.400l-.9 .8-.9-.8h-1.400l-.9 .8-.9-.8-1 0c-.6 0-1-.4-1-1v-9.500c0-.6.4-1 1-1z" fill="url(#gb)" stroke="#5cbcd8" stroke-width=".5"/><path d="M9.300 .5v3.200h3.200" fill="#e0f6fc" stroke="#7ccce4" stroke-width=".4"/><path d="M2 4.200l1.200-.9v4.500M4.500 8l2.300-5.200" stroke="#3a94b4" stroke-width=".9" fill="none"/><path d="M7 5.900c.5-1 2-.8 1.900 .3c0 .8-1.100 1.200-1.900 2.100h2.100" stroke="#3a94b4" stroke-width=".8" fill="none"/></svg><div class="dr" style="left:17.0px;top:387.82px;line-height:15.455px">净值小于<i>13</i>万大于<i>10</i>万起始手数</div><div class="dr" style="left:211.2px;top:387.82px;line-height:15.455px;width:204.60000000000002px;overflow:hidden"><i>1.0</i></div><div style="left:0px;top:401.97px;width:417.4px;height:15.555px;background:#fff;"></div><div style="left:207.2px;top:401.97px;width:1px;height:15.555px;background:#f1f1f1;"></div><svg style="left:1.2px;top:403.47px" width="13" height="13" viewBox="0 0 13 13"><path d="M1.200 .5h8.100l3.200 3.200v7.300c0 .6-.4 1-1 1l-1.300 0-.9 .8-.9-.8h-1.400l-.9 .8-.9-.8h-1.400l-.9 .8-.9-.8-1 0c-.6 0-1-.4-1-1v-9.500c0-.6.4-1 1-1z" fill="url(#gb)" stroke="#5cbcd8" stroke-width=".5"/><path d="M9.300 .5v3.200h3.200" fill="#e0f6fc" stroke="#7ccce4" stroke-width=".4"/><path d="M2 4.200l1.200-.9v4.500M4.500 8l2.300-5.200" stroke="#3a94b4" stroke-width=".9" fill="none"/><path d="M7 5.900c.5-1 2-.8 1.900 .3c0 .8-1.100 1.200-1.900 2.100h2.100" stroke="#3a94b4" stroke-width=".8" fill="none"/></svg><div class="dr" style="left:17.0px;top:403.27px;line-height:15.455px">净值小于<i>15</i>万大于<i>13</i>万起始手数</div><div class="dr" style="left:211.2px;top:403.27px;line-height:15.455px;width:204.60000000000002px;overflow:hidden"><i>1.3</i></div><div style="left:0px;top:417.43px;width:417.4px;height:15.555px;background:#e9e9e9;"></div><div style="left:207.2px;top:417.43px;width:1px;height:15.555px;background:#fff;"></div><svg style="left:1.2px;top:418.93px" width="13" height="13" viewBox="0 0 13 13"><path d="M1.200 .5h8.100l3.200 3.200v7.300c0 .6-.4 1-1 1l-1.300 0-.9 .8-.9-.8h-1.400l-.9 .8-.9-.8h-1.400l-.9 .8-.9-.8-1 0c-.6 0-1-.4-1-1v-9.500c0-.6.4-1 1-1z" fill="url(#gb)" stroke="#5cbcd8" stroke-width=".5"/><path d="M9.300 .5v3.200h3.200" fill="#e0f6fc" stroke="#7ccce4" stroke-width=".4"/><path d="M2 4.200l1.200-.9v4.500M4.500 8l2.300-5.200" stroke="#3a94b4" stroke-width=".9" fill="none"/><path d="M7 5.900c.5-1 2-.8 1.900 .3c0 .8-1.100 1.200-1.900 2.100h2.100" stroke="#3a94b4" stroke-width=".8" fill="none"/></svg><div class="dr" style="left:17.0px;top:418.73px;line-height:15.455px">净值小于<i>20</i>万大于<i>15</i>万起始手数</div><div class="dr" style="left:211.2px;top:418.73px;line-height:15.455px;width:204.60000000000002px;overflow:hidden"><i>1.5</i></div><div style="left:0px;top:432.89px;width:417.4px;height:15.555px;background:#fff;"></div><div style="left:207.2px;top:432.89px;width:1px;height:15.555px;background:#f1f1f1;"></div><svg style="left:1.2px;top:434.39px" width="13" height="13" viewBox="0 0 13 13"><path d="M1.200 .5h8.100l3.200 3.200v7.300c0 .6-.4 1-1 1l-1.300 0-.9 .8-.9-.8h-1.400l-.9 .8-.9-.8h-1.400l-.9 .8-.9-.8-1 0c-.6 0-1-.4-1-1v-9.500c0-.6.4-1 1-1z" fill="url(#gb)" stroke="#5cbcd8" stroke-width=".5"/><path d="M9.300 .5v3.200h3.200" fill="#e0f6fc" stroke="#7ccce4" stroke-width=".4"/><path d="M2 4.200l1.200-.9v4.500M4.500 8l2.300-5.200" stroke="#3a94b4" stroke-width=".9" fill="none"/><path d="M7 5.900c.5-1 2-.8 1.900 .3c0 .8-1.100 1.200-1.900 2.100h2.100" stroke="#3a94b4" stroke-width=".8" fill="none"/></svg><div class="dr" style="left:17.0px;top:434.19px;line-height:15.455px">净值小于<i>25</i>万大于<i>20</i>万起始手数</div><div class="dr" style="left:211.2px;top:434.19px;line-height:15.455px;width:204.60000000000002px;overflow:hidden"><i>2.0</i></div><div style="left:0px;top:448.34px;width:417.4px;height:15.555px;background:#e9e9e9;"></div><div style="left:207.2px;top:448.34px;width:1px;height:15.555px;background:#fff;"></div><svg style="left:1.2px;top:449.84px" width="13" height="13" viewBox="0 0 13 13"><path d="M1.200 .5h8.100l3.200 3.200v7.300c0 .6-.4 1-1 1l-1.300 0-.9 .8-.9-.8h-1.400l-.9 .8-.9-.8h-1.400l-.9 .8-.9-.8-1 0c-.6 0-1-.4-1-1v-9.500c0-.6.4-1 1-1z" fill="url(#gb)" stroke="#5cbcd8" stroke-width=".5"/><path d="M9.300 .5v3.200h3.200" fill="#e0f6fc" stroke="#7ccce4" stroke-width=".4"/><path d="M2 4.200l1.200-.9v4.500M4.500 8l2.300-5.200" stroke="#3a94b4" stroke-width=".9" fill="none"/><path d="M7 5.900c.5-1 2-.8 1.900 .3c0 .8-1.100 1.200-1.900 2.100h2.100" stroke="#3a94b4" stroke-width=".8" fill="none"/></svg><div class="dr" style="left:17.0px;top:449.64px;line-height:15.455px">净值小于<i>30</i>万大于<i>25</i>万起始手数</div><div class="dr" style="left:211.2px;top:449.64px;line-height:15.455px;width:204.60000000000002px;overflow:hidden"><i>2.5</i></div><div style="left:0px;top:463.8px;width:417.4px;height:15.555px;background:#fff;"></div><div style="left:207.2px;top:463.8px;width:1px;height:15.555px;background:#f1f1f1;"></div><svg style="left:1.2px;top:465.3px" width="13" height="13" viewBox="0 0 13 13"><path d="M1.200 .5h8.100l3.200 3.200v7.300c0 .6-.4 1-1 1l-1.300 0-.9 .8-.9-.8h-1.400l-.9 .8-.9-.8h-1.400l-.9 .8-.9-.8-1 0c-.6 0-1-.4-1-1v-9.500c0-.6.4-1 1-1z" fill="url(#gb)" stroke="#5cbcd8" stroke-width=".5"/><path d="M9.300 .5v3.200h3.200" fill="#e0f6fc" stroke="#7ccce4" stroke-width=".4"/><path d="M2 4.200l1.200-.9v4.500M4.500 8l2.300-5.200" stroke="#3a94b4" stroke-width=".9" fill="none"/><path d="M7 5.900c.5-1 2-.8 1.900 .3c0 .8-1.100 1.200-1.900 2.100h2.100" stroke="#3a94b4" stroke-width=".8" fill="none"/></svg><div class="dr" style="left:17.0px;top:465.09px;line-height:15.455px">净值大于<i>30</i>万的起始手数</div><div class="dr" style="left:211.2px;top:465.09px;line-height:15.455px;width:204.60000000000002px;overflow:hidden"><i>3.0</i></div><div style="left:0px;top:479.25px;width:417.4px;height:15.555px;background:#e9e9e9;"></div><div style="left:207.2px;top:479.25px;width:1px;height:15.555px;background:#fff;"></div><svg style="left:1.2px;top:480.75px" width="13" height="13" viewBox="0 0 13 13"><path d="M1.200 .5h8.100l3.200 3.200v7.300c0 .6-.4 1-1 1l-1.300 0-.9 .8-.9-.8h-1.400l-.9 .8-.9-.8h-1.400l-.9 .8-.9-.8-1 0c-.6 0-1-.4-1-1v-9.500c0-.6.4-1 1-1z" fill="url(#gy)" stroke="#d6c250" stroke-width=".5"/><path d="M9.300 .5v3.200h3.200" fill="#faf5cc" stroke="#dccc64" stroke-width=".4"/><text x="1.500" y="8.600" font-family="Liberation Sans" font-size="6.800" font-weight="bold" letter-spacing="-.2" fill="#86761c">ab</text></svg><div class="dr" style="left:17.0px;top:480.55px;line-height:15.455px">关闭上述按净值自动确定开仓手数</div><div class="dr" style="left:211.2px;top:480.55px;line-height:15.455px;width:204.60000000000002px;overflow:hidden"><i>*</i>关闭按净值定手数时将使用下面的手数<i>*</i></div><div style="left:0px;top:494.7px;width:417.4px;height:15.555px;background:#fff;"></div><div style="left:207.2px;top:494.7px;width:1px;height:15.555px;background:#f1f1f1;"></div><svg style="left:1.2px;top:496.2px" width="13" height="13" viewBox="0 0 13 13"><path d="M1.200 .5h8.100l3.200 3.200v7.300c0 .6-.4 1-1 1l-1.300 0-.9 .8-.9-.8h-1.400l-.9 .8-.9-.8h-1.400l-.9 .8-.9-.8-1 0c-.6 0-1-.4-1-1v-9.500c0-.6.4-1 1-1z" fill="url(#gb)" stroke="#5cbcd8" stroke-width=".5"/><path d="M9.300 .5v3.200h3.200" fill="#e0f6fc" stroke="#7ccce4" stroke-width=".4"/><path d="M2 4.200l1.200-.9v4.500M4.500 8l2.300-5.200" stroke="#3a94b4" stroke-width=".9" fill="none"/><path d="M7 5.900c.5-1 2-.8 1.900 .3c0 .8-1.100 1.200-1.900 2.100h2.100" stroke="#3a94b4" stroke-width=".8" fill="none"/></svg><div class="dr" style="left:17.0px;top:496.0px;line-height:15.455px">起始手数</div><div class="dr" style="left:211.2px;top:496.0px;line-height:15.455px;width:204.60000000000002px;overflow:hidden"><i>0.01</i></div><div style="left:0px;top:510.16px;width:417.4px;height:15.555px;background:#e9e9e9;"></div><div style="left:207.2px;top:510.16px;width:1px;height:15.555px;background:#fff;"></div><svg style="left:1.2px;top:511.66px" width="13" height="13" viewBox="0 0 13 13"><path d="M1.200 .5h8.100l3.200 3.200v7.300c0 .6-.4 1-1 1l-1.300 0-.9 .8-.9-.8h-1.400l-.9 .8-.9-.8h-1.400l-.9 .8-.9-.8-1 0c-.6 0-1-.4-1-1v-9.500c0-.6.4-1 1-1z" fill="url(#gb)" stroke="#5cbcd8" stroke-width=".5"/><path d="M9.300 .5v3.200h3.200" fill="#e0f6fc" stroke="#7ccce4" stroke-width=".4"/><path d="M2 4.200l1.200-.9v4.500M4.500 8l2.300-5.200" stroke="#3a94b4" stroke-width=".9" fill="none"/><path d="M7 5.900c.5-1 2-.8 1.900 .3c0 .8-1.100 1.200-1.900 2.100h2.100" stroke="#3a94b4" stroke-width=".8" fill="none"/></svg><div class="dr" style="left:17.0px;top:511.46px;line-height:15.455px">起始手数调节器</div><div class="dr" style="left:211.2px;top:511.46px;line-height:15.455px;width:204.60000000000002px;overflow:hidden"><i>1.0</i></div><div style="left:0px;top:525.62px;width:417.4px;height:15.555px;background:#fff;"></div><div style="left:207.2px;top:525.62px;width:1px;height:15.555px;background:#f1f1f1;"></div><svg style="left:1.2px;top:527.12px" width="13" height="13" viewBox="0 0 13 13"><path d="M1.200 .5h8.100l3.200 3.200v7.300c0 .6-.4 1-1 1l-1.300 0-.9 .8-.9-.8h-1.400l-.9 .8-.9-.8h-1.400l-.9 .8-.9-.8-1 0c-.6 0-1-.4-1-1v-9.500c0-.6.4-1 1-1z" fill="url(#gy)" stroke="#d6c250" stroke-width=".5"/><path d="M9.300 .5v3.200h3.200" fill="#faf5cc" stroke="#dccc64" stroke-width=".4"/><text x="1.500" y="8.600" font-family="Liberation Sans" font-size="6.800" font-weight="bold" letter-spacing="-.2" fill="#86761c">ab</text></svg><div class="dr" style="left:17.0px;top:526.91px;line-height:15.455px">起始手数调节器说明<i>1</i></div><div class="dr" style="left:211.2px;top:526.91px;line-height:15.455px;width:204.60000000000002px;overflow:hidden">默认的是<i>1</i>万净值开<i>0.1</i>手，按<i>0.01</i>为单位增减<i>?..</i></div><div style="left:0px;top:541.07px;width:417.4px;height:15.555px;background:#e9e9e9;"></div><div style="left:207.2px;top:541.07px;width:1px;height:15.555px;background:#fff;"></div><svg style="left:1.2px;top:542.57px" width="13" height="13" viewBox="0 0 13 13"><path d="M1.200 .5h8.100l3.200 3.200v7.300c0 .6-.4 1-1 1l-1.300 0-.9 .8-.9-.8h-1.400l-.9 .8-.9-.8h-1.400l-.9 .8-.9-.8-1 0c-.6 0-1-.4-1-1v-9.500c0-.6.4-1 1-1z" fill="url(#gy)" stroke="#d6c250" stroke-width=".5"/><path d="M9.300 .5v3.200h3.200" fill="#faf5cc" stroke="#dccc64" stroke-width=".4"/><text x="1.500" y="8.600" font-family="Liberation Sans" font-size="6.800" font-weight="bold" letter-spacing="-.2" fill="#86761c">ab</text></svg><div class="dr" style="left:17.0px;top:542.37px;line-height:15.455px">起始手数调节器说明<i>2</i></div><div class="dr" style="left:211.2px;top:542.37px;line-height:15.455px;width:204.60000000000002px;overflow:hidden">起始手数<i>=</i>固定手数<i>*</i>起始手数调节器</div><div style="left:0px;top:556.52px;width:417.4px;height:15.555px;background:#fff;"></div><div style="left:207.2px;top:556.52px;width:1px;height:15.555px;background:#f1f1f1;"></div><svg style="left:1.2px;top:558.02px" width="13" height="13" viewBox="0 0 13 13"><path d="M1.200 .5h8.100l3.200 3.200v7.300c0 .6-.4 1-1 1l-1.300 0-.9 .8-.9-.8h-1.400l-.9 .8-.9-.8h-1.400l-.9 .8-.9-.8-1 0c-.6 0-1-.4-1-1v-9.500c0-.6.4-1 1-1z" fill="url(#gy)" stroke="#d6c250" stroke-width=".5"/><path d="M9.300 .5v3.200h3.200" fill="#faf5cc" stroke="#dccc64" stroke-width=".4"/><text x="1.500" y="8.600" font-family="Liberation Sans" font-size="6.800" font-weight="bold" letter-spacing="-.2" fill="#86761c">ab</text></svg><div class="dr" style="left:17.0px;top:557.82px;line-height:15.455px">起始手数调节器说明<i>3</i></div><div class="dr" style="left:211.2px;top:557.82px;line-height:15.455px;width:204.60000000000002px;overflow:hidden">比如设调节器<i>=0.5</i>，则起始手数<i>=0.1*0.5=0.05</i></div><div style="left:417.4px;top:0px;width:14.299999999999955px;height:565.5px;background:#f3f3f3;"></div><div style="left:423.1px;top:16.8px;width:1.9px;height:127.5px;background:#7e7e7e;border-radius:1px;"></div></div>
<div style="left:728.5px;top:574.7px;width:95.8px;height:19.3px;background:#fdfdfd;border-radius:2.5px;box-shadow:0 0 0 .6px #e0e0e0,0 .8px 0 .5px #d2d2d2;text-align:center;line-height:21.900000000000002px;font-size:9.56px;color:#111">加载<i>(L)</i></div>
<div style="left:728.5px;top:604.6px;width:95.8px;height:19.8px;background:#fdfdfd;border-radius:2.5px;box-shadow:0 0 0 .6px #e0e0e0,0 .8px 0 .5px #d2d2d2;text-align:center;line-height:22.400000000000002px;font-size:9.56px;color:#111">保存<i>(S)</i></div>
<div style="left:610.3px;top:633px;width:67.8px;height:19px;background:#fdfdfd;border-radius:2.5px;box-shadow:0 0 0 .8px #4a9ae0;text-align:center;line-height:21.6px;font-size:9.56px;color:#111">确定</div>
<div style="left:685.1px;top:633px;width:67.8px;height:19px;background:#fdfdfd;border-radius:2.5px;box-shadow:0 0 0 .6px #e0e0e0,0 .8px 0 .5px #d2d2d2;text-align:center;line-height:21.6px;font-size:9.56px;color:#111">取消</div>
<div style="left:760px;top:633px;width:67.5px;height:19px;background:#fdfdfd;border-radius:2.5px;box-shadow:0 0 0 .6px #e0e0e0,0 .8px 0 .5px #d2d2d2;text-align:center;line-height:21.6px;font-size:9.56px;color:#111">重设</div>
<svg style="left:829.5px;top:654.2px" width="4" height="4" viewBox="0 0 4 4"><path d="M3.200 .6v.7M3.200 2.600v.7M1.200 2.600v.7" stroke="#c0c0c0" stroke-width=".8"/></svg>
<svg style="left:456px;top:590px" width="50" height="42" viewBox="0 0 50 42"><g fill="#0b58ee" stroke="#0b58ee" stroke-width="1.6" stroke-linejoin="round"><path d="M15 7.7h19.100l5.900 14-.9 1.400h-17.800l-6.500-14.200z"/></g><g fill="#0b58ee" stroke="#0b58ee" stroke-width=".8" stroke-linejoin="round"><path d="M11.300 11.600l-1.700 2.700 6.400 14.900h20l1.300-2.100h-18.900z"/><path d="M6.300 17.100l-1.200 2.500 6.700 15.500h18.200l2.200-2h-17.800z"/></g></svg>
<div style="top:592.30px;line-height:28px;height:28px;font-size:22px;left:516.50px;color:#0b58ee;letter-spacing:4.3px;"><b style="font-weight:900;-webkit-text-stroke:.7px #0b58ee">精品<i style="font-size:24.5px;letter-spacing:-.3px;margin-left:-.5px;-webkit-text-stroke:.3px #0b58ee">EA</i></b></div>
<div style="top:616.00px;line-height:18px;height:18px;font-size:14px;left:502.60px;color:#0b58ee;letter-spacing:.1px;"><b>eaclubshare.com</b></div></body></html>
